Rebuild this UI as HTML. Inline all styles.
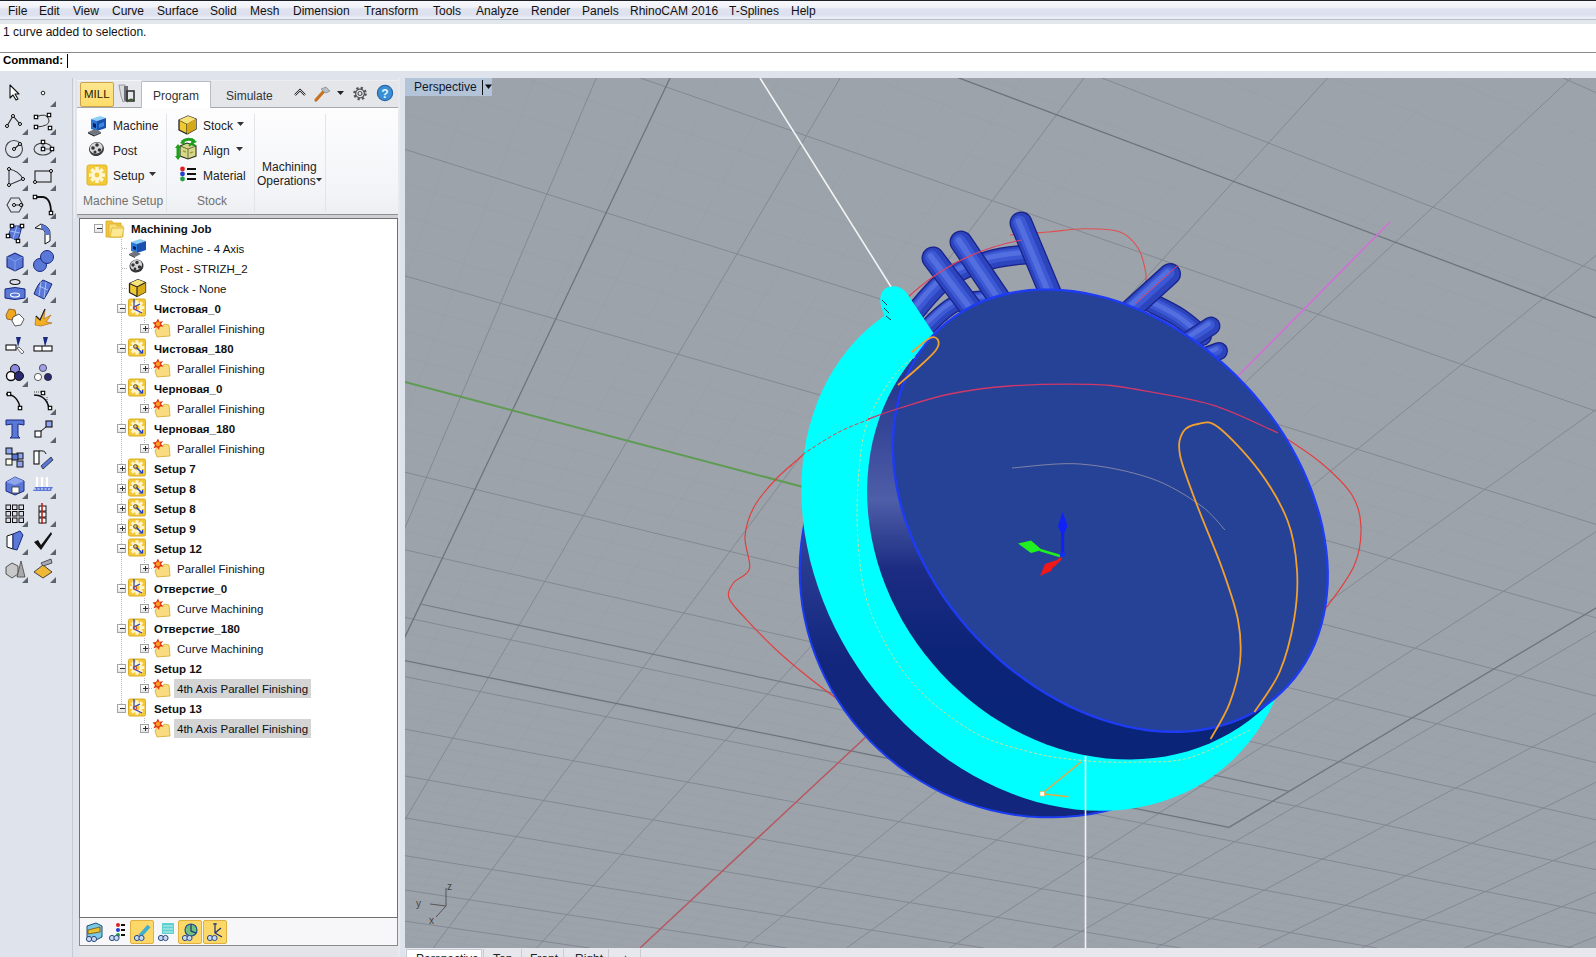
<!DOCTYPE html>
<html><head><meta charset="utf-8">
<style>
*{margin:0;padding:0;box-sizing:border-box}
html,body{width:1596px;height:957px;overflow:hidden;background:#dfe3ec;font-family:"Liberation Sans",sans-serif;font-size:12px;color:#000}
.a{position:absolute;white-space:nowrap}
#topline{left:0;top:0;width:1596px;height:1px;background:#1c2129}
#menu{left:0;top:1px;width:1596px;height:18px;background:linear-gradient(#f6f8fc 0,#f1f3f9 6px,#dfe2ef 8px,#dde0ee 14px,#eceef6 17px)}
#menu span{position:absolute;top:3px;font-size:12px;color:#111}
#ml1{left:0;top:19px;width:1596px;height:1px;background:#b6bec9}
#ml2{left:0;top:20px;width:1596px;height:4px;background:#e2e6ed}
#status{left:0;top:24px;width:1596px;height:28px;background:#fff}
#cmdline{left:0;top:52px;width:1596px;height:1px;background:#8a8a8a}
#cmd{left:0;top:53px;width:1596px;height:18px;background:#fff}
#lefttb{left:0;top:71px;width:73px;height:886px;background:#dfe3ec}
#panel{left:73px;top:71px;width:332px;height:886px;background:#dfe3ec}
#vp{left:405px;top:78px;width:1191px;height:870px;background:#9da3ab;overflow:hidden}
#vptabs{left:405px;top:948px;width:1191px;height:9px;background:#e4e7ed}
.tree{left:79px;top:218px;width:319px;height:700px;background:#fff;border:1px solid #707070}
.row{position:absolute;height:20px;line-height:20px;font-size:11.5px;color:#111}
.b{font-weight:bold}
.bx{width:9px;height:9px;border:1px solid #a4a4a4;background:linear-gradient(#fff,#e4e4e4)}
.trt{font-size:11.5px;color:#111}
.dv{width:1px;background:repeating-linear-gradient(#b8b8b8 0 1px,transparent 1px 2px)}
.dh{height:1px;background:repeating-linear-gradient(90deg,#b8b8b8 0 1px,transparent 1px 2px)}
</style></head><body>
<div class="a" id="topline"></div>
<div class="a" id="menu">
<span style="left:8px">File</span><span style="left:39px">Edit</span><span style="left:73px">View</span><span style="left:112px">Curve</span><span style="left:157px">Surface</span><span style="left:210px">Solid</span><span style="left:250px">Mesh</span><span style="left:293px">Dimension</span><span style="left:364px">Transform</span><span style="left:433px">Tools</span><span style="left:476px">Analyze</span><span style="left:531px">Render</span><span style="left:582px">Panels</span><span style="left:630px">RhinoCAM 2016</span><span style="left:729px">T-Splines</span><span style="left:791px">Help</span>
</div>
<div class="a" id="ml1"></div><div class="a" id="ml2"></div>
<div class="a" id="status"><span class="a" style="left:3px;top:1px;font-size:12px;color:#111">1 curve added to selection.</span></div>
<div class="a" id="cmdline"></div>
<div class="a" id="cmd"><span class="a b" style="left:3px;top:1px;font-size:11.5px;color:#000">Command:</span><div class="a" style="left:67px;top:1px;width:1px;height:14px;background:#000"></div></div>
<div class="a" id="lefttb"></div>
<!--LEFT--><svg class="a" style="left:0;top:0" width="73" height="600" viewBox="0 0 73 600"><g transform="translate(15,93)"><path d="M-5 -8 L-5 5 L-2 2 L1 7 L3 6 L0 1 L4 1 Z" fill="#fff" stroke="#111" stroke-width="1.1" stroke-linejoin="round"/></g><g transform="translate(43,93)"><circle cx="0" cy="0" r="1.8" fill="#fff" stroke="#222" stroke-width="1"/></g><path d="M50 107 L56 107 L56 101 Z" fill="#5c636c"/><g transform="translate(15,121)"><path d="M-8 5 L-2 -5 L5 3" stroke="#222" stroke-width="1.1" fill="none"/><circle cx="-8" cy="5" r="1.5" fill="#fff" stroke="#000" stroke-width="1"/><circle cx="-2" cy="-5" r="1.5" fill="#fff" stroke="#000" stroke-width="1"/><circle cx="5" cy="3" r="1.5" fill="#fff" stroke="#000" stroke-width="1"/></g><path d="M22 135 L28 135 L28 129 Z" fill="#5c636c"/><g transform="translate(43,121)"><path d="M-7 -4 Q4 -9 6 -1 Q7 5 -6 6" stroke="#333" stroke-width="1" fill="none"/><rect x="-8.7" y="-5.7" width="3.4" height="3.4" fill="#fff" stroke="#000" stroke-width="1.1"/><rect x="4.3" y="-7.7" width="3.4" height="3.4" fill="#fff" stroke="#000" stroke-width="1.1"/><rect x="-8.7" y="4.3" width="3.4" height="3.4" fill="#fff" stroke="#000" stroke-width="1.1"/><rect x="5.3" y="5.3" width="3.4" height="3.4" fill="#fff" stroke="#000" stroke-width="1.1"/></g><path d="M50 135 L56 135 L56 129 Z" fill="#5c636c"/><g transform="translate(15,149)"><circle cx="-1" cy="0" r="8.5" fill="none" stroke="#444" stroke-width="1.1"/><path d="M-1 0 L5 -5" stroke="#222" stroke-width="1.2"/><circle cx="-1" cy="0" r="1.5" fill="#fff" stroke="#000" stroke-width="1"/><circle cx="5" cy="-5" r="1.5" fill="#fff" stroke="#000" stroke-width="1"/></g><path d="M22 163 L28 163 L28 157 Z" fill="#5c636c"/><g transform="translate(43,149)"><ellipse cx="0" cy="0" rx="9" ry="6" fill="none" stroke="#444" stroke-width="1.1"/><path d="M0 0 H8 M0 0 V-6" stroke="#222" stroke-width="0.8"/><rect x="-1.7" y="-8.7" width="3.4" height="3.4" fill="#fff" stroke="#000" stroke-width="1.1"/><rect x="-1.7" y="-1.7" width="3.4" height="3.4" fill="#fff" stroke="#000" stroke-width="1.1"/><rect x="7.3" y="-1.7" width="3.4" height="3.4" fill="#fff" stroke="#000" stroke-width="1.1"/></g><path d="M50 163 L56 163 L56 157 Z" fill="#5c636c"/><g transform="translate(15,177)"><path d="M-6 -8 Q4 -6 8 2 L-6 8 Z" stroke="#333" stroke-width="1.1" fill="none"/><circle cx="-6" cy="-8" r="1.5" fill="#fff" stroke="#000" stroke-width="1"/><circle cx="8" cy="2" r="1.5" fill="#fff" stroke="#000" stroke-width="1"/><circle cx="-6" cy="8" r="1.5" fill="#fff" stroke="#000" stroke-width="1"/></g><path d="M22 191 L28 191 L28 185 Z" fill="#5c636c"/><g transform="translate(43,177)"><rect x="-8" y="-6" width="16" height="11" fill="none" stroke="#333" stroke-width="1.2"/><circle cx="8" cy="-6" r="1.5" fill="#fff" stroke="#000" stroke-width="1"/><circle cx="-8" cy="5" r="1.5" fill="#fff" stroke="#000" stroke-width="1"/></g><path d="M50 191 L56 191 L56 185 Z" fill="#5c636c"/><g transform="translate(15,205)"><path d="M-4 -7 L4 -7 L8 0 L4 7 L-4 7 L-8 0 Z" fill="none" stroke="#444" stroke-width="1.1"/><path d="M-1 0 H6" stroke="#222" stroke-width="1"/><circle cx="-1" cy="0" r="1.5" fill="#fff" stroke="#000" stroke-width="1"/><circle cx="6" cy="0" r="1.5" fill="#fff" stroke="#000" stroke-width="1"/></g><path d="M22 219 L28 219 L28 213 Z" fill="#5c636c"/><g transform="translate(43,205)"><path d="M-8 -8 L0 -8 Q8 -7 8 8" stroke="#111" stroke-width="1.8" fill="none"/><rect x="-9.7" y="-9.7" width="3.4" height="3.4" fill="#fff" stroke="#000" stroke-width="1.1"/><rect x="6.3" y="6.3" width="3.4" height="3.4" fill="#fff" stroke="#000" stroke-width="1.1"/></g><path d="M50 219 L56 219 L56 213 Z" fill="#5c636c"/><g transform="translate(15,233)"><path d="M-3 -7 L7 -7 L3 8 L-7 3 Z" fill="#5a78d8" stroke="#1a2a80" stroke-width="1"/><path d="M2 -7 L-2 6 M-5 -2 L5 0" stroke="#b8c8f8" stroke-width="0.8"/><rect x="-4.7" y="-8.7" width="3.4" height="3.4" fill="#fff" stroke="#000" stroke-width="1.1"/><rect x="5.3" y="-8.7" width="3.4" height="3.4" fill="#fff" stroke="#000" stroke-width="1.1"/><rect x="-8.7" y="1.3" width="3.4" height="3.4" fill="#fff" stroke="#000" stroke-width="1.1"/><rect x="1.3" y="6.3" width="3.4" height="3.4" fill="#fff" stroke="#000" stroke-width="1.1"/></g><path d="M22 247 L28 247 L28 241 Z" fill="#5c636c"/><g transform="translate(43,233)"><path d="M-8 -5 L-2 -9 Q8 -6 7 2 L7 8 L2 11 L2 2 Q3 -3 -2 -4 Z" fill="#fff" stroke="#111" stroke-width="1"/><path d="M-2 -9 Q8 -6 7 2 L2 2 Q3 -3 -2 -4Z" fill="#5a78d8"/></g><path d="M50 247 L56 247 L56 241 Z" fill="#5c636c"/><g transform="translate(15,261)"><path d="M-8 -4 L0 -8 L8 -4 L8 6 L0 10 L-8 6 Z" fill="#5a78d8" stroke="#1a2a80" stroke-width="1.1"/><path d="M-8 -4 L0 0 L8 -4 M0 0 V10" stroke="#8ea4ec" stroke-width="0.8" fill="none"/></g><path d="M22 275 L28 275 L28 269 Z" fill="#5c636c"/><g transform="translate(43,261)"><circle cx="-3" cy="4" r="6.5" fill="#5a78d8" stroke="#1a2a80" stroke-width="1"/><circle cx="4" cy="-4" r="6.5" fill="#5a78d8" stroke="#1a2a80" stroke-width="1"/></g><path d="M50 275 L56 275 L56 269 Z" fill="#5c636c"/><g transform="translate(15,289)"><ellipse cx="0" cy="-7" rx="5" ry="2.5" fill="none" stroke="#111" stroke-width="1.1"/><path d="M-10 0 Q0 -3 10 0 L10 9 Q0 12 -10 9 Z" fill="#5a78d8" stroke="#1a2a80" stroke-width="1"/><ellipse cx="0" cy="6" rx="4.5" ry="2" fill="none" stroke="#fff" stroke-width="1.2"/></g><path d="M22 303 L28 303 L28 297 Z" fill="#5c636c"/><g transform="translate(43,289)"><path d="M-9 5 Q-5 -6 0 -9 L9 -5 Q5 4 1 10 Z" fill="#5a78d8" stroke="#1a2a80" stroke-width="1"/><path d="M-4 -3 L5 1 M-2 -7 L-4 7 M3 -7 L1 9" stroke="#c0d0f8" stroke-width="0.8"/></g><path d="M50 303 L56 303 L56 297 Z" fill="#5c636c"/><g transform="translate(15,317)"><path d="M-9 -2 L-6 -8 L0 -7 L1 -2 L-3 3 L-8 2 Z" fill="#f0a820" stroke="#805010" stroke-width="0.8"/><path d="M-2 0 L4 -3 L9 2 L6 8 L0 9 L-3 4Z" fill="#fff" stroke="#333" stroke-width="0.8"/></g><g transform="translate(43,317)"><path d="M-8 8 L-7 -1 L-3 3 L2 -8 L1 2 L8 -2 L3 5 L9 6 L-2 9 Z" fill="#f4b020" stroke="#a06010" stroke-width="0.6"/><path d="M-7 -1 L-3 3 L2 -8" stroke="#222" stroke-width="1.2" fill="none"/></g><g transform="translate(15,345)"><path d="M1 -8 L6 -8 L3 2 Z" fill="#1a2a80"/><rect x="-9" y="0" width="10" height="5" fill="#fff" stroke="#111" stroke-width="1.1"/><path d="M2 3 L7 9 L9 7 L4 2 Z" fill="#fff" stroke="#444" stroke-width="0.8"/></g><g transform="translate(43,345)"><path d="M0 -8 L5 -8 L2 2 Z" fill="#1a2a80"/><rect x="-9" y="1" width="18" height="5" fill="#fff" stroke="#111" stroke-width="1.1"/><path d="M-1 1 V6" stroke="#111"/></g><g transform="translate(15,373)"><circle cx="0" cy="-4" r="4.5" fill="#8a8ae0" stroke="#111" stroke-width="1"/><circle cx="-4" cy="3" r="4.5" fill="#fff" stroke="#111" stroke-width="1.4"/><circle cx="4" cy="3" r="4.5" fill="#2a2a70" stroke="#111" stroke-width="1"/></g><path d="M22 387 L28 387 L28 381 Z" fill="#5c636c"/><g transform="translate(43,373)"><circle cx="0" cy="-5" r="3.6" fill="#a0a0e8" stroke="#334" stroke-width="0.8"/><circle cx="-5" cy="4" r="3.6" fill="#fff" stroke="#333" stroke-width="0.8"/><circle cx="5" cy="4" r="3.6" fill="#2a2a70" stroke="#222" stroke-width="0.8"/></g><g transform="translate(15,401)"><path d="M-9 -7 Q3 -6 5 7" stroke="#111" stroke-width="1.4" fill="none"/><rect x="-7.7" y="-8.7" width="3.4" height="3.4" fill="#fff" stroke="#000" stroke-width="1.1"/><rect x="3.3" y="5.3" width="3.4" height="3.4" fill="#fff" stroke="#000" stroke-width="1.1"/></g><g transform="translate(43,401)"><path d="M-9 -6 Q3 -6 6 7" stroke="#111" stroke-width="1.6" fill="none"/><path d="M-9 -9 L0 -9 M4 -4 V2" stroke="#111" stroke-width="0.8" stroke-dasharray="1 1"/><rect x="-1.7" y="-9.7" width="3.4" height="3.4" fill="#fff" stroke="#000" stroke-width="1.1"/><rect x="5.3" y="5.3" width="3.4" height="3.4" fill="#fff" stroke="#000" stroke-width="1.1"/></g><path d="M50 415 L56 415 L56 409 Z" fill="#5c636c"/><g transform="translate(15,429)"><path d="M-9 -9 L9 -9 L9 -4 L3 -5 L3 7 L5 9 L-5 9 L-3 7 L-3 -5 L-9 -4Z" fill="#5a78d8" stroke="#1a2a80" stroke-width="1"/></g><g transform="translate(43,429)"><rect x="-8" y="2" width="6" height="6" fill="#fff" stroke="#111" stroke-width="1.1"/><rect x="3" y="-8" width="6" height="6" fill="#8ea4ec" stroke="#111" stroke-width="1.1"/><path d="M-2 2 L3 -2" stroke="#111" stroke-width="1"/></g><path d="M50 443 L56 443 L56 437 Z" fill="#5c636c"/><g transform="translate(15,457)"><rect x="-9" y="-9" width="6" height="6" fill="#8ea4ec" stroke="#111"/><rect x="2" y="-4" width="6" height="6" fill="#8ea4ec" stroke="#111"/><rect x="-3" y="-3" width="6" height="6" fill="#5a78d8" stroke="#111"/><rect x="-9" y="2" width="6" height="6" fill="#ffe" stroke="#111"/><rect x="2" y="4" width="6" height="6" fill="#8ea4ec" stroke="#111"/></g><g transform="translate(43,457)"><rect x="-9" y="-6" width="5" height="13" fill="#fff" stroke="#111" stroke-width="1.1"/><path d="M-2 9 L8 0 L10 3 L0 12Z" fill="#5a78d8" stroke="#223" stroke-width="0.8"/><path d="M-4 -6 Q2 -7 3 -3" stroke="#111" fill="none"/></g><g transform="translate(15,485)"><path d="M-9 -3 L0 -8 L9 -4 L9 6 L0 10 L-9 6Z" fill="#5a78d8" stroke="#1a2a80" stroke-width="1"/><path d="M-9 -3 L0 -8 L9 -4 L0 0Z" fill="#8ea4ec"/><rect x="-3" y="2" width="7" height="6" fill="#fff" stroke="#333" stroke-width="0.8"/></g><path d="M22 499 L28 499 L28 493 Z" fill="#5c636c"/><g transform="translate(43,485)"><path d="M-10 6 L8 6 L10 2 L-8 2Z" fill="#5a78d8"/><path d="M-6 -8 V2 M-1 -8 V2 M4 -8 V2" stroke="#fff" stroke-width="2.2"/><path d="M-9 4 H9" stroke="#fff" stroke-dasharray="2 1.5" stroke-width="1"/></g><path d="M50 499 L56 499 L56 493 Z" fill="#5c636c"/><g transform="translate(15,513)"><rect x="-9.0" y="-8.0" width="4.5" height="4.5" fill="#dde" stroke="#111" stroke-width="1"/><rect x="-9.0" y="-1.5" width="4.5" height="4.5" fill="#dde" stroke="#111" stroke-width="1"/><rect x="-9.0" y="5.0" width="4.5" height="4.5" fill="#dde" stroke="#111" stroke-width="1"/><rect x="-2.5" y="-8.0" width="4.5" height="4.5" fill="#dde" stroke="#111" stroke-width="1"/><rect x="-2.5" y="-1.5" width="4.5" height="4.5" fill="#dde" stroke="#111" stroke-width="1"/><rect x="-2.5" y="5.0" width="4.5" height="4.5" fill="#dde" stroke="#111" stroke-width="1"/><rect x="4.0" y="-8.0" width="4.5" height="4.5" fill="#dde" stroke="#111" stroke-width="1"/><rect x="4.0" y="-1.5" width="4.5" height="4.5" fill="#dde" stroke="#111" stroke-width="1"/><rect x="4.0" y="5.0" width="4.5" height="4.5" fill="#dde" stroke="#111" stroke-width="1"/></g><path d="M22 527 L28 527 L28 521 Z" fill="#5c636c"/><g transform="translate(43,513)"><rect x="-4" y="-7" width="7" height="5" fill="#fff" stroke="#111"/><rect x="-4" y="-1" width="7" height="5" fill="#fff" stroke="#111"/><rect x="-4" y="5" width="7" height="5" fill="#fff" stroke="#111"/><path d="M-1 -10 V11" stroke="#c02020" stroke-width="1.6"/></g><path d="M50 527 L56 527 L56 521 Z" fill="#5c636c"/><g transform="translate(15,541)"><path d="M-8 -5 L-2 -7 L-2 8 L-8 6Z" fill="#fff" stroke="#111" stroke-width="1"/><path d="M-2 -7 L5 -10 L8 -6 L2 9 L-2 8Z" fill="#5a78d8" stroke="#1a2a80" stroke-width="1"/></g><path d="M22 555 L28 555 L28 549 Z" fill="#5c636c"/><g transform="translate(43,541)"><path d="M-9 1 L-5 -1 L-2 4 L8 -9 L9 -7 L-2 9 Z" fill="#111"/></g><path d="M50 555 L56 555 L56 549 Z" fill="#5c636c"/><g transform="translate(15,569)"><path d="M-9 -2 L-3 -6 L3 -3 L3 5 L-3 9 L-9 5Z" fill="#c8c8c8" stroke="#333" stroke-width="0.8"/><path d="M2 8 L6 -8 L10 8 Z" fill="#a8a8a8" stroke="#444" stroke-width="0.8"/></g><path d="M22 583 L28 583 L28 577 Z" fill="#5c636c"/><g transform="translate(43,569)"><path d="M-9 3 L0 -4 L9 3 L0 9 Z" fill="#f0b838" stroke="#333" stroke-width="0.9"/><path d="M-2 -6 L8 -10 L9 -6 L0 -3Z" fill="#aab" stroke="#333" stroke-width="0.8"/></g><path d="M50 583 L56 583 L56 577 Z" fill="#5c636c"/></svg><div class="a" style="left:72px;top:78px;width:1px;height:879px;background:#c6cad2"></div><!--/LEFT-->
<div class="a" id="panel"></div>

<!-- PANEL -->
<div class="a" style="left:74px;top:78px;width:1px;height:140px;background:#eef0f4"></div>
<div class="a" style="left:77px;top:80px;width:64px;height:28px;background:#e6e8ee;border-top:1px solid #f4f5f8"></div>
<div class="a" style="left:210px;top:80px;width:190px;height:28px;background:#e4e6ea;border-top:1px solid #eceef2;border-left:1px solid #c9ccd2;border-radius:2px 0 0 0"></div>
<div class="a" style="left:77px;top:107px;width:323px;height:1px;background:#a4a8ae"></div>
<div class="a" style="left:80px;top:82px;width:34px;height:25px;background:linear-gradient(#fde68e,#fddc6a);border:1px solid #caa24a;border-radius:2px"></div>
<span class="a" style="left:84px;top:88px;font-size:11.5px;color:#2a2000">MILL</span>
<svg class="a" style="left:116px;top:82px" width="22" height="24" viewBox="0 0 22 24"><path d="M3 3 L9 3 L10 8 L9 19 L7 20 L5 14 Z" fill="#d8dade" stroke="#9a9ca2" stroke-width="1"/><path d="M8 4 L12 4 L12 18 L10 20 L8 18Z" fill="#6c6e74"/><rect x="11" y="9" width="7" height="10" fill="none" stroke="#333" stroke-width="1.6"/><path d="M11 20 Q14 16 17 18" stroke="#3d5a20" stroke-width="1.5" fill="none"/></svg>
<div class="a" style="left:141px;top:81px;width:70px;height:28px;background:#fff;border:1px solid #b9bcc2;border-bottom:none;border-radius:2px 2px 0 0"></div>
<span class="a" style="left:153px;top:89px;font-size:12px;color:#333">Program</span>
<span class="a" style="left:226px;top:89px;font-size:12px;color:#333">Simulate</span>
<svg class="a" style="left:293px;top:86px" width="14" height="12" viewBox="0 0 14 12"><path d="M2 9 L7 4 L12 9" stroke="#222" stroke-width="2.2" fill="none"/><path d="M2 9 L7 4 L12 9" stroke="#fff" stroke-width="0.8" fill="none"/></svg>
<svg class="a" style="left:313px;top:85px" width="19" height="18" viewBox="0 0 19 18"><path d="M3 15 L11 6" stroke="#c87020" stroke-width="3.2" stroke-linecap="round"/><path d="M8 4 L13 2 L17 6 L13 8 L11 7Z" fill="#b8bcc4" stroke="#8a8e96" stroke-width="0.8"/></svg>
<svg class="a" style="left:336px;top:90px" width="9" height="6" viewBox="0 0 9 6"><path d="M1 1 L8 1 L4.5 5Z" fill="#222"/></svg>
<svg class="a" style="left:351px;top:85px" width="18" height="17" viewBox="0 0 18 17"><g transform="translate(9,8.5)"><circle r="5.6" fill="none" stroke="#555" stroke-width="2.4" stroke-dasharray="2.2 2.2"/><circle r="4.4" fill="none" stroke="#555" stroke-width="1.3"/><circle r="2" fill="none" stroke="#555" stroke-width="1.2"/></g></svg>
<svg class="a" style="left:376px;top:84px" width="18" height="18" viewBox="0 0 18 18"><circle cx="9" cy="9" r="7.6" fill="#3b8fd4" stroke="#2a66a6" stroke-width="1.2"/><text x="9" y="13.5" font-family="Liberation Sans" font-size="12" font-weight="bold" fill="#e8f4ff" text-anchor="middle">?</text></svg>
<!-- ribbon body -->
<div class="a" style="left:77px;top:108px;width:322px;height:107px;background:linear-gradient(#fdfdfe,#f3f4f7 80%,#eceef2)"></div>
<div class="a" style="left:166px;top:114px;width:1px;height:98px;background:#e2e4e8"></div>
<div class="a" style="left:254px;top:114px;width:1px;height:98px;background:#e2e4e8"></div>
<div class="a" style="left:325px;top:114px;width:1px;height:98px;background:#e2e4e8"></div>
<div class="a" style="left:77px;top:214px;width:322px;height:1px;background:#8e9096"></div>
<div class="a" style="left:77px;top:215px;width:322px;height:3px;background:#cfd0d4"></div>
<svg class="a" style="left:87px;top:114px" width="21" height="23" viewBox="0 0 21 23"><path d="M4 5 L13 2 L19 4 L10 7Z" fill="#8cd0f8"/><path d="M4 5 L10 7 L10 17 L4 15Z" fill="#2c78d8"/><path d="M10 7 L19 4 L19 14 L10 17Z" fill="#1a50b0"/><path d="M6 9 L9 10 L9 14 L6 13Z" fill="#0a2050"/><path d="M12 10 L17 8 L17 12 L12 14Z" fill="#3a8ae0"/><path d="M1 18 L8 15 L14 18 L7 21Z" fill="#70747c"/><path d="M1 18 L7 21 L7 22.5 L1 19.5Z" fill="#2a2c30"/><path d="M7 21 L14 18 L14 19.5 L7 22.5Z" fill="#4a4c52"/></svg>
<span class="a" style="left:113px;top:119px;font-size:12px;color:#222">Machine</span>
<svg class="a" style="left:87px;top:140px" width="19" height="18" viewBox="0 0 19 18"><ellipse cx="9.5" cy="9" rx="7.5" ry="7" fill="#3a3a3e" transform="rotate(-20 9.5 9)"/><ellipse cx="9.5" cy="8" rx="6.5" ry="5.5" fill="#d8d8dc" transform="rotate(-20 9.5 9)"/><circle cx="6" cy="8" r="1.8" fill="#333"/><circle cx="10" cy="5" r="1.8" fill="#333"/><circle cx="12.5" cy="10" r="1.8" fill="#333"/><circle cx="8" cy="12" r="1.5" fill="#333"/></svg>
<span class="a" style="left:113px;top:144px;font-size:12px;color:#222">Post</span>
<svg class="a" style="left:86px;top:164px" width="22" height="22" viewBox="0 0 22 22"><rect x="1" y="1" width="20" height="20" rx="2" fill="#f2cb3a" stroke="#e0b420" stroke-width="1"/><g transform="translate(11,11)" fill="#fff6d0"><circle r="5.5"/><rect x="-1.8" y="-8" width="3.6" height="16"/><rect x="-8" y="-1.8" width="16" height="3.6"/><rect x="-1.8" y="-8" width="3.6" height="16" transform="rotate(45)"/><rect x="-8" y="-1.8" width="16" height="3.6" transform="rotate(45)"/><circle r="2.4" fill="#f2cb3a"/></g></svg>
<span class="a" style="left:113px;top:169px;font-size:12px;color:#222">Setup</span>
<svg class="a" style="left:149px;top:172px" width="7" height="5" viewBox="0 0 7 5"><path d="M0 0 L7 0 L3.5 4Z" fill="#333"/></svg>
<svg class="a" style="left:177px;top:114px" width="21" height="22" viewBox="0 0 21 22"><path d="M2 6 L11 2 L19 5 L19 15 L10 20 L2 16Z" fill="#f0c830" stroke="#222" stroke-width="1.3" stroke-linejoin="round"/><path d="M2 6 L10 10 L19 5" fill="none" stroke="#222" stroke-width="1.1"/><path d="M10 10 L10 20" stroke="#222" stroke-width="1.1"/><path d="M2 6 L11 2 L19 5 L10 10Z" fill="#f8e27a"/><path d="M10 10 L19 5 L19 15 L10 20Z" fill="#d4a818"/></svg>
<span class="a" style="left:203px;top:119px;font-size:12px;color:#222">Stock</span>
<svg class="a" style="left:237px;top:122px" width="7" height="5" viewBox="0 0 7 5"><path d="M0 0 L7 0 L3.5 4Z" fill="#333"/></svg>
<svg class="a" style="left:175px;top:137px" width="24" height="24" viewBox="0 0 24 24"><path d="M5 9 L12 6 L21 9 L21 19 L13 22 L5 19Z" fill="#d6d88a" stroke="#303020" stroke-width="1.1"/><path d="M5 9 L13 12 L21 9 M13 12 V22" stroke="#505030" stroke-width="0.8" fill="none"/><path d="M8 14 L11 15 M15 16 L18 15" stroke="#a0a040" stroke-width="1.5"/><path d="M7 5 Q13 0 19 4" stroke="#1ea01e" stroke-width="3" fill="none"/><path d="M17 1 L22 5 L16 7Z" fill="#1ea01e"/><path d="M9 2 L5 6 L10 8Z" fill="#1ea01e"/><path d="M3 10 V20" stroke="#1ea01e" stroke-width="3"/><path d="M0 11 L3 7 L6 11Z M0 19 L3 23 L6 19Z" fill="#1ea01e"/><path d="M14 9 L17 6 L20 9" stroke="#1ea01e" stroke-width="2" fill="none"/></svg>
<span class="a" style="left:203px;top:144px;font-size:12px;color:#222">Align</span>
<svg class="a" style="left:236px;top:147px" width="7" height="5" viewBox="0 0 7 5"><path d="M0 0 L7 0 L3.5 4Z" fill="#333"/></svg>
<svg class="a" style="left:179px;top:166px" width="18" height="16" viewBox="0 0 18 16"><circle cx="3.5" cy="3" r="2.4" fill="#e02020"/><circle cx="3.5" cy="8" r="2.4" fill="#2040d0"/><circle cx="3.5" cy="13" r="2.4" fill="#20a040"/><rect x="8" y="2" width="9" height="2" fill="#111"/><rect x="8" y="7" width="9" height="2" fill="#111"/><rect x="8" y="12" width="9" height="2" fill="#111"/></svg>
<span class="a" style="left:203px;top:169px;font-size:12px;color:#222">Material</span>
<span class="a" style="left:83px;top:194px;font-size:12px;color:#707070">Machine Setup</span>
<span class="a" style="left:197px;top:194px;font-size:12px;color:#707070">Stock</span>
<span class="a" style="left:262px;top:160px;font-size:12px;color:#222">Machining</span>
<span class="a" style="left:257px;top:174px;font-size:12px;color:#222">Operations</span>
<svg class="a" style="left:316px;top:178px" width="6" height="4" viewBox="0 0 6 4"><path d="M0 0 L6 0 L3 3.5Z" fill="#333"/></svg>
<div class="a tree"></div>
<!--TREE--><div class="a dv" style="left:121px;top:239px;height:470px"></div>
<div class="a dh" style="left:122px;top:248px;width:6px"></div>
<div class="a dh" style="left:122px;top:268px;width:6px"></div>
<div class="a dh" style="left:122px;top:288px;width:6px"></div>
<div class="a dv" style="left:144px;top:318px;height:10px"></div>
<div class="a dh" style="left:149px;top:328px;width:3px"></div>
<div class="a dv" style="left:144px;top:358px;height:10px"></div>
<div class="a dh" style="left:149px;top:368px;width:3px"></div>
<div class="a dv" style="left:144px;top:398px;height:10px"></div>
<div class="a dh" style="left:149px;top:408px;width:3px"></div>
<div class="a dv" style="left:144px;top:438px;height:10px"></div>
<div class="a dh" style="left:149px;top:448px;width:3px"></div>
<div class="a dv" style="left:144px;top:558px;height:10px"></div>
<div class="a dh" style="left:149px;top:568px;width:3px"></div>
<div class="a dv" style="left:144px;top:598px;height:10px"></div>
<div class="a dh" style="left:149px;top:608px;width:3px"></div>
<div class="a dv" style="left:144px;top:638px;height:10px"></div>
<div class="a dh" style="left:149px;top:648px;width:3px"></div>
<div class="a dv" style="left:144px;top:678px;height:10px"></div>
<div class="a dh" style="left:149px;top:688px;width:3px"></div>
<div class="a dv" style="left:144px;top:718px;height:10px"></div>
<div class="a dh" style="left:149px;top:728px;width:3px"></div>
<svg class="a" style="left:104px;top:218px" width="21" height="21" viewBox="0 0 21 21"><path d="M2 3 L8 3 L9 5 L17 5 L17 19 L2 19Z" fill="#f0c640" stroke="#d8a820" stroke-width="0.8"/><path d="M5 6 L12 6 L13 8 L19 8 L19 19 L5 19Z" fill="#f8de78" stroke="#dcae30" stroke-width="0.8"/><path d="M8 10 L20 10 L18 19 L6 19Z" fill="#fbe890" stroke="#e0b030" stroke-width="0.8"/></svg>
<div class="a bx" style="left:94px;top:224px"><div class="a" style="left:2px;top:3px;width:5px;height:1px;background:#333"></div></div>
<span class="a trt" style="left:131px;top:223px;font-weight:bold">Machining Job</span>
<svg class="a" style="left:128px;top:238px" width="19" height="20" viewBox="0 0 19 20"><path d="M3 4 L12 1 L18 3 L9 6Z" fill="#8cd0f8"/><path d="M3 4 L9 6 L9 15 L3 13Z" fill="#2c78d8"/><path d="M9 6 L18 3 L18 12 L9 15Z" fill="#1a50b0"/><path d="M5 8 L8 9 L8 12 L5 11Z" fill="#0a2050"/><path d="M1 16 L7 13 L13 16 L7 19Z" fill="#70747c"/><path d="M1 16 L7 19 L7 20 L1 17Z" fill="#2a2c30"/></svg>
<span class="a trt" style="left:160px;top:243px;font-weight:normal">Machine - 4 Axis</span>
<svg class="a" style="left:128px;top:258px" width="17" height="16" viewBox="0 0 17 16"><ellipse cx="8.5" cy="8" rx="7" ry="6.5" fill="#333" transform="rotate(-20 8.5 8)"/><ellipse cx="8.5" cy="7" rx="6" ry="5" fill="#d8d8dc" transform="rotate(-20 8.5 8)"/><circle cx="5" cy="7" r="1.7" fill="#333"/><circle cx="9" cy="4.5" r="1.7" fill="#333"/><circle cx="11.5" cy="9" r="1.7" fill="#333"/><circle cx="7" cy="11" r="1.4" fill="#333"/></svg>
<span class="a trt" style="left:160px;top:263px;font-weight:normal">Post - STRIZH_2</span>
<svg class="a" style="left:128px;top:278px" width="19" height="20" viewBox="0 0 19 20"><path d="M1.5 5.5 L10 1.5 L17.5 4.5 L17.5 14 L9 18.5 L1.5 14.5Z" fill="#f0c830" stroke="#222" stroke-width="1.3" stroke-linejoin="round"/><path d="M1.5 5.5 L10 1.5 L17.5 4.5 L9 9Z" fill="#f8e27a"/><path d="M9 9 L17.5 4.5 L17.5 14 L9 18.5Z" fill="#d8ac18"/><path d="M1.5 5.5 L9 9 L17.5 4.5 M9 9 L9 18.5" fill="none" stroke="#222" stroke-width="1.1"/></svg>
<span class="a trt" style="left:160px;top:283px;font-weight:normal">Stock - None</span>
<svg class="a" style="left:128px;top:298px" width="19" height="19" viewBox="0 0 19 19"><rect x="0.5" y="1" width="17" height="17" rx="1.5" fill="#f2c838" stroke="#dcae20"/><g transform="translate(9,9.5)" fill="#fff4cc"><circle r="5.2"/><rect x="-1.5" y="-7.3" width="3" height="3.2" transform="rotate(0)"/><rect x="-1.5" y="-7.3" width="3" height="3.2" transform="rotate(45)"/><rect x="-1.5" y="-7.3" width="3" height="3.2" transform="rotate(90)"/><rect x="-1.5" y="-7.3" width="3" height="3.2" transform="rotate(135)"/><rect x="-1.5" y="-7.3" width="3" height="3.2" transform="rotate(180)"/><rect x="-1.5" y="-7.3" width="3" height="3.2" transform="rotate(225)"/><rect x="-1.5" y="-7.3" width="3" height="3.2" transform="rotate(270)"/><rect x="-1.5" y="-7.3" width="3" height="3.2" transform="rotate(315)"/><circle r="2.6" fill="#f2cb3a"/></g><path d="M6 1 L6 11 L14 15" stroke="#2040c0" stroke-width="1.2" fill="none"/><path d="M6 9 L12 6" stroke="#2040c0" stroke-width="1.1"/><circle cx="7" cy="10" r="1.8" fill="none" stroke="#c04040" stroke-width="1"/></svg>
<div class="a bx" style="left:117px;top:304px"><div class="a" style="left:2px;top:3px;width:5px;height:1px;background:#333"></div></div>
<span class="a trt" style="left:154px;top:303px;font-weight:bold">Чистовая_0</span>
<svg class="a" style="left:152px;top:318px" width="19" height="20" viewBox="0 0 19 20"><path d="M5 9 L11 8 L12 6 L17 7 L18 18 L5 19 L3 13Z" fill="#f8dc80" stroke="#d8a830" stroke-width="0.8"/><g transform="translate(6,6)"><path d="M0 -5.5 L1.5 -2 L5 -3 L3 0 L5.5 2.5 L1.8 2.5 L1 6 L-1 3 L-4.5 4.5 L-3 1 L-5.5 -1.5 L-2 -2 Z" fill="#e83010"/><circle r="2.2" fill="#f8a020"/></g></svg>
<div class="a bx" style="left:140px;top:324px"><div class="a" style="left:2px;top:3px;width:5px;height:1px;background:#333"></div><div class="a" style="left:4px;top:1px;width:1px;height:5px;background:#333"></div></div>
<span class="a trt" style="left:177px;top:323px;font-weight:normal">Parallel Finishing</span>
<svg class="a" style="left:128px;top:338px" width="19" height="19" viewBox="0 0 19 19"><rect x="0.5" y="1" width="17" height="17" rx="1.5" fill="#f2c838" stroke="#dcae20"/><g transform="translate(9,9.5)" fill="#fff4cc"><circle r="5.2"/><rect x="-1.5" y="-7.3" width="3" height="3.2" transform="rotate(0)"/><rect x="-1.5" y="-7.3" width="3" height="3.2" transform="rotate(45)"/><rect x="-1.5" y="-7.3" width="3" height="3.2" transform="rotate(90)"/><rect x="-1.5" y="-7.3" width="3" height="3.2" transform="rotate(135)"/><rect x="-1.5" y="-7.3" width="3" height="3.2" transform="rotate(180)"/><rect x="-1.5" y="-7.3" width="3" height="3.2" transform="rotate(225)"/><rect x="-1.5" y="-7.3" width="3" height="3.2" transform="rotate(270)"/><rect x="-1.5" y="-7.3" width="3" height="3.2" transform="rotate(315)"/><circle r="2.6" fill="#f2cb3a"/></g><circle cx="7.5" cy="8.5" r="1.8" fill="none" stroke="#605020" stroke-width="1.1"/><path d="M8.5 9.5 L14 15" stroke="#2040c0" stroke-width="1.5"/><path d="M11.5 15 L14.5 15 L14.5 12" stroke="#2040c0" stroke-width="1.2" fill="none"/></svg>
<div class="a bx" style="left:117px;top:344px"><div class="a" style="left:2px;top:3px;width:5px;height:1px;background:#333"></div></div>
<span class="a trt" style="left:154px;top:343px;font-weight:bold">Чистовая_180</span>
<svg class="a" style="left:152px;top:358px" width="19" height="20" viewBox="0 0 19 20"><path d="M5 9 L11 8 L12 6 L17 7 L18 18 L5 19 L3 13Z" fill="#f8dc80" stroke="#d8a830" stroke-width="0.8"/><g transform="translate(6,6)"><path d="M0 -5.5 L1.5 -2 L5 -3 L3 0 L5.5 2.5 L1.8 2.5 L1 6 L-1 3 L-4.5 4.5 L-3 1 L-5.5 -1.5 L-2 -2 Z" fill="#e83010"/><circle r="2.2" fill="#f8a020"/></g></svg>
<div class="a bx" style="left:140px;top:364px"><div class="a" style="left:2px;top:3px;width:5px;height:1px;background:#333"></div><div class="a" style="left:4px;top:1px;width:1px;height:5px;background:#333"></div></div>
<span class="a trt" style="left:177px;top:363px;font-weight:normal">Parallel Finishing</span>
<svg class="a" style="left:128px;top:378px" width="19" height="19" viewBox="0 0 19 19"><rect x="0.5" y="1" width="17" height="17" rx="1.5" fill="#f2c838" stroke="#dcae20"/><g transform="translate(9,9.5)" fill="#fff4cc"><circle r="5.2"/><rect x="-1.5" y="-7.3" width="3" height="3.2" transform="rotate(0)"/><rect x="-1.5" y="-7.3" width="3" height="3.2" transform="rotate(45)"/><rect x="-1.5" y="-7.3" width="3" height="3.2" transform="rotate(90)"/><rect x="-1.5" y="-7.3" width="3" height="3.2" transform="rotate(135)"/><rect x="-1.5" y="-7.3" width="3" height="3.2" transform="rotate(180)"/><rect x="-1.5" y="-7.3" width="3" height="3.2" transform="rotate(225)"/><rect x="-1.5" y="-7.3" width="3" height="3.2" transform="rotate(270)"/><rect x="-1.5" y="-7.3" width="3" height="3.2" transform="rotate(315)"/><circle r="2.6" fill="#f2cb3a"/></g><circle cx="7.5" cy="8.5" r="1.8" fill="none" stroke="#605020" stroke-width="1.1"/><path d="M8.5 9.5 L14 15" stroke="#2040c0" stroke-width="1.5"/><path d="M11.5 15 L14.5 15 L14.5 12" stroke="#2040c0" stroke-width="1.2" fill="none"/></svg>
<div class="a bx" style="left:117px;top:384px"><div class="a" style="left:2px;top:3px;width:5px;height:1px;background:#333"></div></div>
<span class="a trt" style="left:154px;top:383px;font-weight:bold">Черновая_0</span>
<svg class="a" style="left:152px;top:398px" width="19" height="20" viewBox="0 0 19 20"><path d="M5 9 L11 8 L12 6 L17 7 L18 18 L5 19 L3 13Z" fill="#f8dc80" stroke="#d8a830" stroke-width="0.8"/><g transform="translate(6,6)"><path d="M0 -5.5 L1.5 -2 L5 -3 L3 0 L5.5 2.5 L1.8 2.5 L1 6 L-1 3 L-4.5 4.5 L-3 1 L-5.5 -1.5 L-2 -2 Z" fill="#e83010"/><circle r="2.2" fill="#f8a020"/></g></svg>
<div class="a bx" style="left:140px;top:404px"><div class="a" style="left:2px;top:3px;width:5px;height:1px;background:#333"></div><div class="a" style="left:4px;top:1px;width:1px;height:5px;background:#333"></div></div>
<span class="a trt" style="left:177px;top:403px;font-weight:normal">Parallel Finishing</span>
<svg class="a" style="left:128px;top:418px" width="19" height="19" viewBox="0 0 19 19"><rect x="0.5" y="1" width="17" height="17" rx="1.5" fill="#f2c838" stroke="#dcae20"/><g transform="translate(9,9.5)" fill="#fff4cc"><circle r="5.2"/><rect x="-1.5" y="-7.3" width="3" height="3.2" transform="rotate(0)"/><rect x="-1.5" y="-7.3" width="3" height="3.2" transform="rotate(45)"/><rect x="-1.5" y="-7.3" width="3" height="3.2" transform="rotate(90)"/><rect x="-1.5" y="-7.3" width="3" height="3.2" transform="rotate(135)"/><rect x="-1.5" y="-7.3" width="3" height="3.2" transform="rotate(180)"/><rect x="-1.5" y="-7.3" width="3" height="3.2" transform="rotate(225)"/><rect x="-1.5" y="-7.3" width="3" height="3.2" transform="rotate(270)"/><rect x="-1.5" y="-7.3" width="3" height="3.2" transform="rotate(315)"/><circle r="2.6" fill="#f2cb3a"/></g><circle cx="7.5" cy="8.5" r="1.8" fill="none" stroke="#605020" stroke-width="1.1"/><path d="M8.5 9.5 L14 15" stroke="#2040c0" stroke-width="1.5"/><path d="M11.5 15 L14.5 15 L14.5 12" stroke="#2040c0" stroke-width="1.2" fill="none"/></svg>
<div class="a bx" style="left:117px;top:424px"><div class="a" style="left:2px;top:3px;width:5px;height:1px;background:#333"></div></div>
<span class="a trt" style="left:154px;top:423px;font-weight:bold">Черновая_180</span>
<svg class="a" style="left:152px;top:438px" width="19" height="20" viewBox="0 0 19 20"><path d="M5 9 L11 8 L12 6 L17 7 L18 18 L5 19 L3 13Z" fill="#f8dc80" stroke="#d8a830" stroke-width="0.8"/><g transform="translate(6,6)"><path d="M0 -5.5 L1.5 -2 L5 -3 L3 0 L5.5 2.5 L1.8 2.5 L1 6 L-1 3 L-4.5 4.5 L-3 1 L-5.5 -1.5 L-2 -2 Z" fill="#e83010"/><circle r="2.2" fill="#f8a020"/></g></svg>
<div class="a bx" style="left:140px;top:444px"><div class="a" style="left:2px;top:3px;width:5px;height:1px;background:#333"></div><div class="a" style="left:4px;top:1px;width:1px;height:5px;background:#333"></div></div>
<span class="a trt" style="left:177px;top:443px;font-weight:normal">Parallel Finishing</span>
<svg class="a" style="left:128px;top:458px" width="19" height="19" viewBox="0 0 19 19"><rect x="0.5" y="1" width="17" height="17" rx="1.5" fill="#f2c838" stroke="#dcae20"/><g transform="translate(9,9.5)" fill="#fff4cc"><circle r="5.2"/><rect x="-1.5" y="-7.3" width="3" height="3.2" transform="rotate(0)"/><rect x="-1.5" y="-7.3" width="3" height="3.2" transform="rotate(45)"/><rect x="-1.5" y="-7.3" width="3" height="3.2" transform="rotate(90)"/><rect x="-1.5" y="-7.3" width="3" height="3.2" transform="rotate(135)"/><rect x="-1.5" y="-7.3" width="3" height="3.2" transform="rotate(180)"/><rect x="-1.5" y="-7.3" width="3" height="3.2" transform="rotate(225)"/><rect x="-1.5" y="-7.3" width="3" height="3.2" transform="rotate(270)"/><rect x="-1.5" y="-7.3" width="3" height="3.2" transform="rotate(315)"/><circle r="2.6" fill="#f2cb3a"/></g><circle cx="7.5" cy="8.5" r="1.8" fill="none" stroke="#605020" stroke-width="1.1"/><path d="M8.5 9.5 L14 15" stroke="#2040c0" stroke-width="1.5"/><path d="M11.5 15 L14.5 15 L14.5 12" stroke="#2040c0" stroke-width="1.2" fill="none"/></svg>
<div class="a bx" style="left:117px;top:464px"><div class="a" style="left:2px;top:3px;width:5px;height:1px;background:#333"></div><div class="a" style="left:4px;top:1px;width:1px;height:5px;background:#333"></div></div>
<span class="a trt" style="left:154px;top:463px;font-weight:bold">Setup 7</span>
<svg class="a" style="left:128px;top:478px" width="19" height="19" viewBox="0 0 19 19"><rect x="0.5" y="1" width="17" height="17" rx="1.5" fill="#f2c838" stroke="#dcae20"/><g transform="translate(9,9.5)" fill="#fff4cc"><circle r="5.2"/><rect x="-1.5" y="-7.3" width="3" height="3.2" transform="rotate(0)"/><rect x="-1.5" y="-7.3" width="3" height="3.2" transform="rotate(45)"/><rect x="-1.5" y="-7.3" width="3" height="3.2" transform="rotate(90)"/><rect x="-1.5" y="-7.3" width="3" height="3.2" transform="rotate(135)"/><rect x="-1.5" y="-7.3" width="3" height="3.2" transform="rotate(180)"/><rect x="-1.5" y="-7.3" width="3" height="3.2" transform="rotate(225)"/><rect x="-1.5" y="-7.3" width="3" height="3.2" transform="rotate(270)"/><rect x="-1.5" y="-7.3" width="3" height="3.2" transform="rotate(315)"/><circle r="2.6" fill="#f2cb3a"/></g><circle cx="7.5" cy="8.5" r="1.8" fill="none" stroke="#605020" stroke-width="1.1"/><path d="M8.5 9.5 L14 15" stroke="#2040c0" stroke-width="1.5"/><path d="M11.5 15 L14.5 15 L14.5 12" stroke="#2040c0" stroke-width="1.2" fill="none"/></svg>
<div class="a bx" style="left:117px;top:484px"><div class="a" style="left:2px;top:3px;width:5px;height:1px;background:#333"></div><div class="a" style="left:4px;top:1px;width:1px;height:5px;background:#333"></div></div>
<span class="a trt" style="left:154px;top:483px;font-weight:bold">Setup 8</span>
<svg class="a" style="left:128px;top:498px" width="19" height="19" viewBox="0 0 19 19"><rect x="0.5" y="1" width="17" height="17" rx="1.5" fill="#f2c838" stroke="#dcae20"/><g transform="translate(9,9.5)" fill="#fff4cc"><circle r="5.2"/><rect x="-1.5" y="-7.3" width="3" height="3.2" transform="rotate(0)"/><rect x="-1.5" y="-7.3" width="3" height="3.2" transform="rotate(45)"/><rect x="-1.5" y="-7.3" width="3" height="3.2" transform="rotate(90)"/><rect x="-1.5" y="-7.3" width="3" height="3.2" transform="rotate(135)"/><rect x="-1.5" y="-7.3" width="3" height="3.2" transform="rotate(180)"/><rect x="-1.5" y="-7.3" width="3" height="3.2" transform="rotate(225)"/><rect x="-1.5" y="-7.3" width="3" height="3.2" transform="rotate(270)"/><rect x="-1.5" y="-7.3" width="3" height="3.2" transform="rotate(315)"/><circle r="2.6" fill="#f2cb3a"/></g><circle cx="7.5" cy="8.5" r="1.8" fill="none" stroke="#605020" stroke-width="1.1"/><path d="M8.5 9.5 L14 15" stroke="#2040c0" stroke-width="1.5"/><path d="M11.5 15 L14.5 15 L14.5 12" stroke="#2040c0" stroke-width="1.2" fill="none"/></svg>
<div class="a bx" style="left:117px;top:504px"><div class="a" style="left:2px;top:3px;width:5px;height:1px;background:#333"></div><div class="a" style="left:4px;top:1px;width:1px;height:5px;background:#333"></div></div>
<span class="a trt" style="left:154px;top:503px;font-weight:bold">Setup 8</span>
<svg class="a" style="left:128px;top:518px" width="19" height="19" viewBox="0 0 19 19"><rect x="0.5" y="1" width="17" height="17" rx="1.5" fill="#f2c838" stroke="#dcae20"/><g transform="translate(9,9.5)" fill="#fff4cc"><circle r="5.2"/><rect x="-1.5" y="-7.3" width="3" height="3.2" transform="rotate(0)"/><rect x="-1.5" y="-7.3" width="3" height="3.2" transform="rotate(45)"/><rect x="-1.5" y="-7.3" width="3" height="3.2" transform="rotate(90)"/><rect x="-1.5" y="-7.3" width="3" height="3.2" transform="rotate(135)"/><rect x="-1.5" y="-7.3" width="3" height="3.2" transform="rotate(180)"/><rect x="-1.5" y="-7.3" width="3" height="3.2" transform="rotate(225)"/><rect x="-1.5" y="-7.3" width="3" height="3.2" transform="rotate(270)"/><rect x="-1.5" y="-7.3" width="3" height="3.2" transform="rotate(315)"/><circle r="2.6" fill="#f2cb3a"/></g><circle cx="7.5" cy="8.5" r="1.8" fill="none" stroke="#605020" stroke-width="1.1"/><path d="M8.5 9.5 L14 15" stroke="#2040c0" stroke-width="1.5"/><path d="M11.5 15 L14.5 15 L14.5 12" stroke="#2040c0" stroke-width="1.2" fill="none"/></svg>
<div class="a bx" style="left:117px;top:524px"><div class="a" style="left:2px;top:3px;width:5px;height:1px;background:#333"></div><div class="a" style="left:4px;top:1px;width:1px;height:5px;background:#333"></div></div>
<span class="a trt" style="left:154px;top:523px;font-weight:bold">Setup 9</span>
<svg class="a" style="left:128px;top:538px" width="19" height="19" viewBox="0 0 19 19"><rect x="0.5" y="1" width="17" height="17" rx="1.5" fill="#f2c838" stroke="#dcae20"/><g transform="translate(9,9.5)" fill="#fff4cc"><circle r="5.2"/><rect x="-1.5" y="-7.3" width="3" height="3.2" transform="rotate(0)"/><rect x="-1.5" y="-7.3" width="3" height="3.2" transform="rotate(45)"/><rect x="-1.5" y="-7.3" width="3" height="3.2" transform="rotate(90)"/><rect x="-1.5" y="-7.3" width="3" height="3.2" transform="rotate(135)"/><rect x="-1.5" y="-7.3" width="3" height="3.2" transform="rotate(180)"/><rect x="-1.5" y="-7.3" width="3" height="3.2" transform="rotate(225)"/><rect x="-1.5" y="-7.3" width="3" height="3.2" transform="rotate(270)"/><rect x="-1.5" y="-7.3" width="3" height="3.2" transform="rotate(315)"/><circle r="2.6" fill="#f2cb3a"/></g><circle cx="7.5" cy="8.5" r="1.8" fill="none" stroke="#605020" stroke-width="1.1"/><path d="M8.5 9.5 L14 15" stroke="#2040c0" stroke-width="1.5"/><path d="M11.5 15 L14.5 15 L14.5 12" stroke="#2040c0" stroke-width="1.2" fill="none"/></svg>
<div class="a bx" style="left:117px;top:544px"><div class="a" style="left:2px;top:3px;width:5px;height:1px;background:#333"></div></div>
<span class="a trt" style="left:154px;top:543px;font-weight:bold">Setup 12</span>
<svg class="a" style="left:152px;top:558px" width="19" height="20" viewBox="0 0 19 20"><path d="M5 9 L11 8 L12 6 L17 7 L18 18 L5 19 L3 13Z" fill="#f8dc80" stroke="#d8a830" stroke-width="0.8"/><g transform="translate(6,6)"><path d="M0 -5.5 L1.5 -2 L5 -3 L3 0 L5.5 2.5 L1.8 2.5 L1 6 L-1 3 L-4.5 4.5 L-3 1 L-5.5 -1.5 L-2 -2 Z" fill="#e83010"/><circle r="2.2" fill="#f8a020"/></g></svg>
<div class="a bx" style="left:140px;top:564px"><div class="a" style="left:2px;top:3px;width:5px;height:1px;background:#333"></div><div class="a" style="left:4px;top:1px;width:1px;height:5px;background:#333"></div></div>
<span class="a trt" style="left:177px;top:563px;font-weight:normal">Parallel Finishing</span>
<svg class="a" style="left:128px;top:578px" width="19" height="19" viewBox="0 0 19 19"><rect x="0.5" y="1" width="17" height="17" rx="1.5" fill="#f2c838" stroke="#dcae20"/><g transform="translate(9,9.5)" fill="#fff4cc"><circle r="5.2"/><rect x="-1.5" y="-7.3" width="3" height="3.2" transform="rotate(0)"/><rect x="-1.5" y="-7.3" width="3" height="3.2" transform="rotate(45)"/><rect x="-1.5" y="-7.3" width="3" height="3.2" transform="rotate(90)"/><rect x="-1.5" y="-7.3" width="3" height="3.2" transform="rotate(135)"/><rect x="-1.5" y="-7.3" width="3" height="3.2" transform="rotate(180)"/><rect x="-1.5" y="-7.3" width="3" height="3.2" transform="rotate(225)"/><rect x="-1.5" y="-7.3" width="3" height="3.2" transform="rotate(270)"/><rect x="-1.5" y="-7.3" width="3" height="3.2" transform="rotate(315)"/><circle r="2.6" fill="#f2cb3a"/></g><path d="M6 1 L6 11 L14 15" stroke="#2040c0" stroke-width="1.2" fill="none"/><path d="M6 9 L12 6" stroke="#2040c0" stroke-width="1.1"/><circle cx="7" cy="10" r="1.8" fill="none" stroke="#c04040" stroke-width="1"/></svg>
<div class="a bx" style="left:117px;top:584px"><div class="a" style="left:2px;top:3px;width:5px;height:1px;background:#333"></div></div>
<span class="a trt" style="left:154px;top:583px;font-weight:bold">Отверстие_0</span>
<svg class="a" style="left:152px;top:598px" width="19" height="20" viewBox="0 0 19 20"><path d="M5 9 L11 8 L12 6 L17 7 L18 18 L5 19 L3 13Z" fill="#f8dc80" stroke="#d8a830" stroke-width="0.8"/><g transform="translate(6,6)"><path d="M0 -5.5 L1.5 -2 L5 -3 L3 0 L5.5 2.5 L1.8 2.5 L1 6 L-1 3 L-4.5 4.5 L-3 1 L-5.5 -1.5 L-2 -2 Z" fill="#e83010"/><circle r="2.2" fill="#f8a020"/></g></svg>
<div class="a bx" style="left:140px;top:604px"><div class="a" style="left:2px;top:3px;width:5px;height:1px;background:#333"></div><div class="a" style="left:4px;top:1px;width:1px;height:5px;background:#333"></div></div>
<span class="a trt" style="left:177px;top:603px;font-weight:normal">Curve Machining</span>
<svg class="a" style="left:128px;top:618px" width="19" height="19" viewBox="0 0 19 19"><rect x="0.5" y="1" width="17" height="17" rx="1.5" fill="#f2c838" stroke="#dcae20"/><g transform="translate(9,9.5)" fill="#fff4cc"><circle r="5.2"/><rect x="-1.5" y="-7.3" width="3" height="3.2" transform="rotate(0)"/><rect x="-1.5" y="-7.3" width="3" height="3.2" transform="rotate(45)"/><rect x="-1.5" y="-7.3" width="3" height="3.2" transform="rotate(90)"/><rect x="-1.5" y="-7.3" width="3" height="3.2" transform="rotate(135)"/><rect x="-1.5" y="-7.3" width="3" height="3.2" transform="rotate(180)"/><rect x="-1.5" y="-7.3" width="3" height="3.2" transform="rotate(225)"/><rect x="-1.5" y="-7.3" width="3" height="3.2" transform="rotate(270)"/><rect x="-1.5" y="-7.3" width="3" height="3.2" transform="rotate(315)"/><circle r="2.6" fill="#f2cb3a"/></g><path d="M6 1 L6 11 L14 15" stroke="#2040c0" stroke-width="1.2" fill="none"/><path d="M6 9 L12 6" stroke="#2040c0" stroke-width="1.1"/><circle cx="7" cy="10" r="1.8" fill="none" stroke="#c04040" stroke-width="1"/></svg>
<div class="a bx" style="left:117px;top:624px"><div class="a" style="left:2px;top:3px;width:5px;height:1px;background:#333"></div></div>
<span class="a trt" style="left:154px;top:623px;font-weight:bold">Отверстие_180</span>
<svg class="a" style="left:152px;top:638px" width="19" height="20" viewBox="0 0 19 20"><path d="M5 9 L11 8 L12 6 L17 7 L18 18 L5 19 L3 13Z" fill="#f8dc80" stroke="#d8a830" stroke-width="0.8"/><g transform="translate(6,6)"><path d="M0 -5.5 L1.5 -2 L5 -3 L3 0 L5.5 2.5 L1.8 2.5 L1 6 L-1 3 L-4.5 4.5 L-3 1 L-5.5 -1.5 L-2 -2 Z" fill="#e83010"/><circle r="2.2" fill="#f8a020"/></g></svg>
<div class="a bx" style="left:140px;top:644px"><div class="a" style="left:2px;top:3px;width:5px;height:1px;background:#333"></div><div class="a" style="left:4px;top:1px;width:1px;height:5px;background:#333"></div></div>
<span class="a trt" style="left:177px;top:643px;font-weight:normal">Curve Machining</span>
<svg class="a" style="left:128px;top:658px" width="19" height="19" viewBox="0 0 19 19"><rect x="0.5" y="1" width="17" height="17" rx="1.5" fill="#f2c838" stroke="#dcae20"/><g transform="translate(9,9.5)" fill="#fff4cc"><circle r="5.2"/><rect x="-1.5" y="-7.3" width="3" height="3.2" transform="rotate(0)"/><rect x="-1.5" y="-7.3" width="3" height="3.2" transform="rotate(45)"/><rect x="-1.5" y="-7.3" width="3" height="3.2" transform="rotate(90)"/><rect x="-1.5" y="-7.3" width="3" height="3.2" transform="rotate(135)"/><rect x="-1.5" y="-7.3" width="3" height="3.2" transform="rotate(180)"/><rect x="-1.5" y="-7.3" width="3" height="3.2" transform="rotate(225)"/><rect x="-1.5" y="-7.3" width="3" height="3.2" transform="rotate(270)"/><rect x="-1.5" y="-7.3" width="3" height="3.2" transform="rotate(315)"/><circle r="2.6" fill="#f2cb3a"/></g><path d="M6 1 L6 11 L14 15" stroke="#2040c0" stroke-width="1.2" fill="none"/><path d="M6 9 L12 6" stroke="#2040c0" stroke-width="1.1"/><circle cx="7" cy="10" r="1.8" fill="none" stroke="#c04040" stroke-width="1"/></svg>
<div class="a bx" style="left:117px;top:664px"><div class="a" style="left:2px;top:3px;width:5px;height:1px;background:#333"></div></div>
<span class="a trt" style="left:154px;top:663px;font-weight:bold">Setup 12</span>
<svg class="a" style="left:152px;top:678px" width="19" height="20" viewBox="0 0 19 20"><path d="M5 9 L11 8 L12 6 L17 7 L18 18 L5 19 L3 13Z" fill="#f8dc80" stroke="#d8a830" stroke-width="0.8"/><g transform="translate(6,6)"><path d="M0 -5.5 L1.5 -2 L5 -3 L3 0 L5.5 2.5 L1.8 2.5 L1 6 L-1 3 L-4.5 4.5 L-3 1 L-5.5 -1.5 L-2 -2 Z" fill="#e83010"/><circle r="2.2" fill="#f8a020"/></g></svg>
<div class="a bx" style="left:140px;top:684px"><div class="a" style="left:2px;top:3px;width:5px;height:1px;background:#333"></div><div class="a" style="left:4px;top:1px;width:1px;height:5px;background:#333"></div></div>
<div class="a" style="left:174px;top:679px;width:137px;height:19px;background:#d4d4d4"></div>
<span class="a trt" style="left:177px;top:683px;font-weight:normal">4th Axis Parallel Finishing</span>
<svg class="a" style="left:128px;top:698px" width="19" height="19" viewBox="0 0 19 19"><rect x="0.5" y="1" width="17" height="17" rx="1.5" fill="#f2c838" stroke="#dcae20"/><g transform="translate(9,9.5)" fill="#fff4cc"><circle r="5.2"/><rect x="-1.5" y="-7.3" width="3" height="3.2" transform="rotate(0)"/><rect x="-1.5" y="-7.3" width="3" height="3.2" transform="rotate(45)"/><rect x="-1.5" y="-7.3" width="3" height="3.2" transform="rotate(90)"/><rect x="-1.5" y="-7.3" width="3" height="3.2" transform="rotate(135)"/><rect x="-1.5" y="-7.3" width="3" height="3.2" transform="rotate(180)"/><rect x="-1.5" y="-7.3" width="3" height="3.2" transform="rotate(225)"/><rect x="-1.5" y="-7.3" width="3" height="3.2" transform="rotate(270)"/><rect x="-1.5" y="-7.3" width="3" height="3.2" transform="rotate(315)"/><circle r="2.6" fill="#f2cb3a"/></g><path d="M6 1 L6 11 L14 15" stroke="#2040c0" stroke-width="1.2" fill="none"/><path d="M6 9 L12 6" stroke="#2040c0" stroke-width="1.1"/><circle cx="7" cy="10" r="1.8" fill="none" stroke="#c04040" stroke-width="1"/></svg>
<div class="a bx" style="left:117px;top:704px"><div class="a" style="left:2px;top:3px;width:5px;height:1px;background:#333"></div></div>
<span class="a trt" style="left:154px;top:703px;font-weight:bold">Setup 13</span>
<svg class="a" style="left:152px;top:718px" width="19" height="20" viewBox="0 0 19 20"><path d="M5 9 L11 8 L12 6 L17 7 L18 18 L5 19 L3 13Z" fill="#f8dc80" stroke="#d8a830" stroke-width="0.8"/><g transform="translate(6,6)"><path d="M0 -5.5 L1.5 -2 L5 -3 L3 0 L5.5 2.5 L1.8 2.5 L1 6 L-1 3 L-4.5 4.5 L-3 1 L-5.5 -1.5 L-2 -2 Z" fill="#e83010"/><circle r="2.2" fill="#f8a020"/></g></svg>
<div class="a bx" style="left:140px;top:724px"><div class="a" style="left:2px;top:3px;width:5px;height:1px;background:#333"></div><div class="a" style="left:4px;top:1px;width:1px;height:5px;background:#333"></div></div>
<div class="a" style="left:174px;top:719px;width:137px;height:19px;background:#d4d4d4"></div>
<span class="a trt" style="left:177px;top:723px;font-weight:normal">4th Axis Parallel Finishing</span><!--/TREE-->

<!-- bottom toolbar -->
<div class="a" style="left:79px;top:918px;width:319px;height:28px;background:#f7f7f9;border-left:1px solid #8a8a8a;border-right:1px solid #8a8a8a;border-bottom:1px solid #8a8a8a"></div>
<div class="a" style="left:79px;top:946px;width:319px;height:11px;background:#e3e5ea"></div>
<svg class="a" style="left:84px;top:921px" width="20" height="22" viewBox="0 0 20 22"><path d="M3 5 L12 2 L18 5 L18 16 L10 20 L3 16Z" fill="#7ac8e8" stroke="#205070" stroke-width="1"/><path d="M4 9 L16 6 L16 11 L4 13Z" fill="#e8c030" stroke="#705010" stroke-width="0.8"/><circle cx="5" cy="18" r="2.6" fill="#c8d8f0" stroke="#2a4a80" stroke-width="1"/><circle cx="10" cy="18" r="2.6" fill="#c8d8f0" stroke="#2a4a80" stroke-width="1"/></svg>
<svg class="a" style="left:108px;top:921px" width="20" height="22" viewBox="0 0 20 22"><circle cx="10" cy="4" r="2" fill="#e02020"/><circle cx="10" cy="9" r="2" fill="#2040d0"/><circle cx="10" cy="14" r="2" fill="#20a040"/><rect x="13" y="3" width="4" height="2" fill="#111"/><rect x="13" y="8" width="4" height="2" fill="#111"/><rect x="13" y="13" width="4" height="2" fill="#111"/><circle cx="4" cy="17" r="2.6" fill="#c8d8f0" stroke="#2a4a80" stroke-width="1"/><circle cx="8.5" cy="17" r="2.6" fill="#c8d8f0" stroke="#2a4a80" stroke-width="1"/></svg>
<div class="a" style="left:130px;top:920px;width:24px;height:24px;background:#fcd868;border:1px solid #e0b040;border-radius:2px"></div>
<svg class="a" style="left:132px;top:921px" width="20" height="22" viewBox="0 0 20 22"><path d="M8 15 L17 5" stroke="#40b0d0" stroke-width="4"/><circle cx="5" cy="17" r="2.6" fill="#c8d8f0" stroke="#2a4a80" stroke-width="1"/><circle cx="9.5" cy="17" r="2.6" fill="#c8d8f0" stroke="#2a4a80" stroke-width="1"/></svg>
<svg class="a" style="left:156px;top:921px" width="20" height="22" viewBox="0 0 20 22"><rect x="6" y="2" width="12" height="11" fill="#60d0d0"/><path d="M7 5 H17 M7 8 H17 M7 11 H17" stroke="#c0f0f0" stroke-width="1"/><circle cx="5" cy="17" r="2.6" fill="#c8d8f0" stroke="#2a4a80" stroke-width="1"/><circle cx="9.5" cy="17" r="2.6" fill="#c8d8f0" stroke="#2a4a80" stroke-width="1"/></svg>
<div class="a" style="left:178px;top:920px;width:24px;height:24px;background:#fcd868;border:1px solid #e0b040;border-radius:2px"></div>
<svg class="a" style="left:180px;top:921px" width="20" height="22" viewBox="0 0 20 22"><circle cx="11" cy="9" r="6" fill="#70c080" stroke="#205090" stroke-width="1.2"/><path d="M11 3 L11 10 L16 12" stroke="#203070" stroke-width="1.2" fill="none"/><circle cx="5" cy="17" r="2.6" fill="#c8d8f0" stroke="#2a4a80" stroke-width="1"/><circle cx="9.5" cy="17" r="2.6" fill="#c8d8f0" stroke="#2a4a80" stroke-width="1"/></svg>
<div class="a" style="left:203px;top:920px;width:24px;height:24px;background:#fcd868;border:1px solid #e0b040;border-radius:2px"></div>
<svg class="a" style="left:205px;top:921px" width="20" height="22" viewBox="0 0 20 22"><path d="M10 2 L10 12 L17 16 M10 12 L16 7 M8 3 H12" stroke="#203070" stroke-width="1.2" fill="none"/><circle cx="5" cy="17" r="2.6" fill="#c8d8f0" stroke="#2a4a80" stroke-width="1"/><circle cx="9.5" cy="17" r="2.6" fill="#c8d8f0" stroke="#2a4a80" stroke-width="1"/></svg>
<div class="a" style="left:398px;top:78px;width:2px;height:879px;background:#e8e9ee"></div>
<!--VP--><svg class="a" style="left:405px;top:78px" width="1191" height="870" viewBox="405 78 1191 870"><defs>
<linearGradient id="cyl" gradientUnits="userSpaceOnUse" x1="0" y1="380" x2="0" y2="700">
<stop offset="0" stop-color="#26368c"/><stop offset="0.375" stop-color="#4e5ea8"/><stop offset="0.59" stop-color="#1c2c82"/><stop offset="0.85" stop-color="#0c2478"/><stop offset="1" stop-color="#0a2478"/></linearGradient>
<linearGradient id="nav" gradientUnits="userSpaceOnUse" x1="0" y1="520" x2="0" y2="660">
<stop offset="0" stop-color="#34449a"/><stop offset="1" stop-color="#12267e"/></linearGradient>
<clipPath id="ring"><path d="M935 336 L1284.5 689 L1320 870 L700 870 L700 300 L900 300 Z"/></clipPath>
</defs><rect x="405" y="78" width="1191" height="870" fill="#9da3ab"/><path d="M1447.9 78.0L1596.0 141.5M413.3 78.0L405.0 105.2M1332.7 78.0L1596.0 187.4M474.3 78.0L405.0 279.1M1217.4 78.0L1596.0 230.4M535.3 78.0L405.0 416.5M986.7 78.0L1596.0 309.0M657.3 78.0L405.0 619.8M871.3 78.0L1596.0 345.0M718.3 78.0L405.0 697.1M755.9 78.0L1596.0 379.0M779.3 78.0L405.0 763.0M525.0 78.0L1596.0 441.7M901.2 78.0L405.0 869.3M409.4 78.0L1596.0 470.7M962.1 78.0L405.0 912.8M405.0 113.9L1596.0 498.2M1023.1 78.0L407.4 948.0M405.0 183.3L1596.0 549.4M1144.9 78.0L459.1 948.0M405.0 215.6L1596.0 573.2M1205.8 78.0L484.9 948.0M405.0 246.4L1596.0 596.0M1266.7 78.0L510.8 948.0M405.0 304.1L1596.0 638.6M1388.5 78.0L562.5 948.0M405.0 331.2L1596.0 658.5M1449.4 78.0L588.3 948.0M405.0 357.1L1596.0 677.7M1510.2 78.0L614.1 948.0M405.0 405.9L1596.0 713.7M1596.0 110.3L665.8 948.0M405.0 428.8L1596.0 730.6M1596.0 162.1L691.6 948.0M405.0 450.9L1596.0 746.9M1596.0 210.3L717.4 948.0M405.0 492.7L1596.0 777.7M1596.0 297.6L769.1 948.0M405.0 512.4L1596.0 792.3M1596.0 337.2L794.9 948.0M405.0 531.4L1596.0 806.3M1596.0 374.5L820.7 948.0M405.0 567.6L1596.0 833.0M1596.0 442.7L872.2 948.0M405.0 584.7L1596.0 845.7M1596.0 474.0L898.0 948.0M405.0 601.3L1596.0 857.9M1596.0 503.6L923.8 948.0M405.0 632.9L1596.0 881.2M1596.0 558.4L975.4 948.0M405.0 648.0L1596.0 892.3M1596.0 583.8L1001.2 948.0M405.0 662.6L1596.0 903.1M1596.0 607.9L1026.9 948.0M405.0 690.4L1596.0 923.6M1596.0 652.9L1078.4 948.0M405.0 703.7L1596.0 933.4M1596.0 673.8L1104.2 948.0M405.0 716.6L1596.0 943.0M1596.0 693.9L1130.0 948.0M405.0 741.4L1524.4 948.0M1596.0 731.4L1181.4 948.0M405.0 753.2L1475.3 948.0M1596.0 749.0L1207.2 948.0M405.0 764.7L1426.2 948.0M1596.0 765.9L1232.9 948.0M405.0 786.9L1328.0 948.0M1596.0 797.8L1284.4 948.0M405.0 797.5L1278.9 948.0M1596.0 812.8L1310.1 948.0M405.0 807.8L1229.7 948.0M1596.0 827.3L1335.8 948.0M405.0 827.7L1131.4 948.0M1596.0 854.6L1387.3 948.0M405.0 837.3L1082.2 948.0M1596.0 867.5L1413.0 948.0M405.0 846.6L1033.0 948.0M1596.0 880.0L1438.7 948.0M405.0 864.6L934.6 948.0M1596.0 903.8L1490.1 948.0M405.0 873.3L885.3 948.0M1596.0 915.0L1515.8 948.0M405.0 881.7L836.1 948.0M1596.0 926.0L1541.4 948.0M405.0 898.1L737.5 948.0M1596.0 946.8L1592.8 948.0M405.0 906.0L688.2 948.0M405.0 913.7L638.9 948.0M405.0 928.6L540.2 948.0M405.0 935.8L490.8 948.0M405.0 942.9L441.5 948.0" stroke="#959ba4" stroke-width="1" fill="none" opacity="0.28"/><path d="M1563.1 78.0L1596.0 92.6M1102.1 78.0L1596.0 270.9M596.3 78.0L405.0 527.8M640.4 78.0L1596.0 411.2M840.2 78.0L405.0 819.8M405.0 149.4L1596.0 524.4M1084.0 78.0L433.2 948.0M405.0 275.9L1596.0 617.8M1327.6 78.0L536.6 948.0M405.0 382.0L1596.0 696.0M1571.1 78.0L640.0 948.0M405.0 472.2L1596.0 762.6M1596.0 255.4L743.2 948.0M405.0 549.8L1596.0 819.9M1596.0 409.6L846.5 948.0M405.0 617.4L1596.0 869.7M1596.0 531.7L949.6 948.0M405.0 676.7L1596.0 913.5M1596.0 630.9L1052.7 948.0M405.0 729.2L1573.4 948.0M1596.0 713.1L1155.7 948.0M405.0 776.0L1377.1 948.0M1596.0 782.2L1258.7 948.0M405.0 817.9L1180.6 948.0M1596.0 841.2L1361.5 948.0M405.0 855.7L983.8 948.0M1596.0 892.1L1464.4 948.0M405.0 890.0L786.8 948.0M1596.0 936.5L1567.1 948.0M405.0 921.2L589.5 948.0" stroke="#838992" stroke-width="1" fill="none"/><path d="M713.8 -14.3L394.7 658.6M394.7 658.6L1228.9 827.4M1228.9 827.4L1893.9 430.0M1893.9 430.0L713.8 -14.3" stroke="#6e747d" stroke-width="1.3" fill="none"/><path d="M420.6 604.0L1289.3 791.3" stroke="#767c85" stroke-width="1.2" fill="none"/><path d="M405.0 382.0 L1060.7 554.9" stroke="#5e9c54" stroke-width="2" fill="none"/><path d="M640.0 948.0 L1060.7 554.9" stroke="#b65a62" stroke-width="1.5" fill="none"/><path d="M760 78 L893 290" stroke="#f4f4f4" stroke-width="1.6" fill="none"/><path d="M1237 377 L1390 222" stroke="#d070d8" stroke-width="1.6" fill="none"/><path d="M803.6 454.6C799.2 458.5 785.3 469.3 777.0 478.0C768.7 486.7 759.3 497.2 754.0 507.0C748.7 516.8 745.8 526.2 745.0 536.5C744.2 546.8 751.4 561.0 749.5 568.7C747.6 576.5 736.8 578.1 733.4 583.0C730.0 587.9 727.1 592.2 729.0 598.0C730.9 603.8 736.0 608.3 745.0 618.0C754.0 627.7 767.4 642.3 783.0 656.0C798.6 669.7 824.2 689.7 838.7 700.0C853.2 710.3 864.8 715.0 870.0 718.0" stroke="#e04040" stroke-width="1.2" fill="none"/><path d="M1278.0 433.0C1285.0 437.8 1307.7 451.7 1320.0 462.0C1332.3 472.3 1345.2 484.2 1352.0 495.0C1358.8 505.8 1360.7 515.2 1361.0 527.0C1361.3 538.8 1360.2 552.0 1354.0 566.0C1347.8 580.0 1333.0 598.4 1324.0 610.7C1315.0 623.0 1304.0 635.1 1300.0 640.0" stroke="#e04040" stroke-width="1.2" fill="none"/><path d="M1010.0 235.0C1016.3 234.5 1035.4 233.0 1048.0 232.0C1060.6 231.0 1073.6 228.8 1085.6 228.8C1097.6 228.8 1111.3 228.8 1120.0 232.0C1128.7 235.2 1133.7 241.2 1138.0 248.0C1142.3 254.8 1144.5 265.7 1145.7 272.7C1146.9 279.7 1145.1 287.1 1145.0 290.0" stroke="#e05050" stroke-width="1.1" fill="none"/><path d="M910.0 318.0C915.8 311.7 931.7 289.7 945.0 280.0C958.3 270.3 975.8 264.3 990.0 260.0C1004.2 255.7 1023.3 255.0 1030.0 254.0" stroke="#18228a" stroke-width="20" stroke-linecap="round" fill="none"/><path d="M910.0 318.0C915.8 311.7 931.7 289.7 945.0 280.0C958.3 270.3 975.8 264.3 990.0 260.0C1004.2 255.7 1023.3 255.0 1030.0 254.0" stroke="#2c44bc" stroke-width="17.5" stroke-linecap="round" fill="none"/><path d="M910.0 318.0C915.8 311.7 931.7 289.7 945.0 280.0C958.3 270.3 975.8 264.3 990.0 260.0C1004.2 255.7 1023.3 255.0 1030.0 254.0" stroke="#3c58d4" stroke-width="11.0" stroke-linecap="round" fill="none" transform="translate(-1.5,-1.2)"/><path d="M910.0 318.0C915.8 311.7 931.7 289.7 945.0 280.0C958.3 270.3 975.8 264.3 990.0 260.0C1004.2 255.7 1023.3 255.0 1030.0 254.0" stroke="#5c78e4" stroke-width="5.0" stroke-linecap="round" fill="none" transform="translate(-2.5,-2)" opacity="0.7"/><path d="M1021 223L1054 302" stroke="#18228a" stroke-width="23" stroke-linecap="round" fill="none"/><path d="M1021 223L1054 302" stroke="#2c44bc" stroke-width="20.5" stroke-linecap="round" fill="none"/><path d="M1021 223L1054 302" stroke="#3c58d4" stroke-width="12.7" stroke-linecap="round" fill="none" transform="translate(-1.5,-1.2)"/><path d="M1021 223L1054 302" stroke="#5c78e4" stroke-width="5.8" stroke-linecap="round" fill="none" transform="translate(-2.5,-2)" opacity="0.7"/><path d="M926.0 328.0C930.8 324.0 944.3 309.0 955.0 304.0C965.7 299.0 984.2 299.0 990.0 298.0" stroke="#18228a" stroke-width="17" stroke-linecap="round" fill="none"/><path d="M926.0 328.0C930.8 324.0 944.3 309.0 955.0 304.0C965.7 299.0 984.2 299.0 990.0 298.0" stroke="#2c44bc" stroke-width="14.5" stroke-linecap="round" fill="none"/><path d="M926.0 328.0C930.8 324.0 944.3 309.0 955.0 304.0C965.7 299.0 984.2 299.0 990.0 298.0" stroke="#3c58d4" stroke-width="9.4" stroke-linecap="round" fill="none" transform="translate(-1.5,-1.2)"/><path d="M926.0 328.0C930.8 324.0 944.3 309.0 955.0 304.0C965.7 299.0 984.2 299.0 990.0 298.0" stroke="#5c78e4" stroke-width="4.2" stroke-linecap="round" fill="none" transform="translate(-2.5,-2)" opacity="0.7"/><path d="M933 258L980 320" stroke="#18228a" stroke-width="23" stroke-linecap="round" fill="none"/><path d="M933 258L980 320" stroke="#2c44bc" stroke-width="20.5" stroke-linecap="round" fill="none"/><path d="M933 258L980 320" stroke="#3c58d4" stroke-width="12.7" stroke-linecap="round" fill="none" transform="translate(-1.5,-1.2)"/><path d="M933 258L980 320" stroke="#5c78e4" stroke-width="5.8" stroke-linecap="round" fill="none" transform="translate(-2.5,-2)" opacity="0.7"/><path d="M961 242L1005 307" stroke="#18228a" stroke-width="23" stroke-linecap="round" fill="none"/><path d="M961 242L1005 307" stroke="#2c44bc" stroke-width="20.5" stroke-linecap="round" fill="none"/><path d="M961 242L1005 307" stroke="#3c58d4" stroke-width="12.7" stroke-linecap="round" fill="none" transform="translate(-1.5,-1.2)"/><path d="M961 242L1005 307" stroke="#5c78e4" stroke-width="5.8" stroke-linecap="round" fill="none" transform="translate(-2.5,-2)" opacity="0.7"/><path d="M905 300 Q955 252 1022 240" stroke="#e04060" stroke-width="1.2" fill="none"/><path d="M1150.0 302.0C1155.0 304.7 1171.3 312.3 1180.0 318.0C1188.7 323.7 1198.3 333.0 1202.0 336.0" stroke="#18228a" stroke-width="20" stroke-linecap="round" fill="none"/><path d="M1150.0 302.0C1155.0 304.7 1171.3 312.3 1180.0 318.0C1188.7 323.7 1198.3 333.0 1202.0 336.0" stroke="#2c44bc" stroke-width="17.5" stroke-linecap="round" fill="none"/><path d="M1150.0 302.0C1155.0 304.7 1171.3 312.3 1180.0 318.0C1188.7 323.7 1198.3 333.0 1202.0 336.0" stroke="#3c58d4" stroke-width="11.0" stroke-linecap="round" fill="none" transform="translate(-1.5,-1.2)"/><path d="M1150.0 302.0C1155.0 304.7 1171.3 312.3 1180.0 318.0C1188.7 323.7 1198.3 333.0 1202.0 336.0" stroke="#5c78e4" stroke-width="5.0" stroke-linecap="round" fill="none" transform="translate(-2.5,-2)" opacity="0.7"/><path d="M1170 274L1126 314" stroke="#18228a" stroke-width="22" stroke-linecap="round" fill="none"/><path d="M1170 274L1126 314" stroke="#2c44bc" stroke-width="19.5" stroke-linecap="round" fill="none"/><path d="M1170 274L1126 314" stroke="#3c58d4" stroke-width="12.1" stroke-linecap="round" fill="none" transform="translate(-1.5,-1.2)"/><path d="M1170 274L1126 314" stroke="#5c78e4" stroke-width="5.5" stroke-linecap="round" fill="none" transform="translate(-2.5,-2)" opacity="0.7"/><path d="M1211 326L1180 346" stroke="#18228a" stroke-width="19" stroke-linecap="round" fill="none"/><path d="M1211 326L1180 346" stroke="#2c44bc" stroke-width="16.5" stroke-linecap="round" fill="none"/><path d="M1211 326L1180 346" stroke="#3c58d4" stroke-width="10.5" stroke-linecap="round" fill="none" transform="translate(-1.5,-1.2)"/><path d="M1211 326L1180 346" stroke="#5c78e4" stroke-width="4.8" stroke-linecap="round" fill="none" transform="translate(-2.5,-2)" opacity="0.7"/><path d="M1219 351L1192 361" stroke="#18228a" stroke-width="18" stroke-linecap="round" fill="none"/><path d="M1219 351L1192 361" stroke="#2c44bc" stroke-width="15.5" stroke-linecap="round" fill="none"/><path d="M1219 351L1192 361" stroke="#3c58d4" stroke-width="9.9" stroke-linecap="round" fill="none" transform="translate(-1.5,-1.2)"/><path d="M1219 351L1192 361" stroke="#5c78e4" stroke-width="4.5" stroke-linecap="round" fill="none" transform="translate(-2.5,-2)" opacity="0.7"/><path d="M1177 266 L1135 304" stroke="#e04060" stroke-width="1" fill="none"/><g clip-path="url(#ring)"><path d="M908.9 773.6L898.5 766.1L888.4 758.1L878.8 749.6L869.7 740.6L861.0 731.2L852.8 721.4L845.1 711.1L838.0 700.5L831.4 689.6L825.5 678.4L820.1 666.9L815.3 655.1L811.1 643.2L807.6 631.0L804.7 618.7L802.4 606.3L800.9 593.9L799.9 581.3L799.7 568.8L800.1 556.3L801.2 543.9L802.9 531.5L805.3 519.3L808.3 507.2L812.0 495.4L816.3 483.7L821.2 472.4L826.7 461.3L832.9 450.5L839.6 440.1L846.8 430.0L854.6 420.4L862.9 411.2L871.7 402.4L880.9 394.2L890.6 386.4L900.7 379.2L911.2 372.5L922.1 366.4L933.3 360.8L944.8 355.9L956.5 351.5L968.5 347.8L980.7 344.7L993.1 342.2L1005.6 340.4L1018.1 339.3L1030.8 338.8L1043.5 338.9L1056.2 339.8L1068.8 341.2L1081.4 343.3L1093.9 346.1L1106.2 349.5L1118.3 353.5L1130.3 358.1L1142.0 363.4L1153.4 369.2L1164.5 375.6L1175.3 382.6L1185.7 390.1L1195.7 398.1L1205.3 406.6L1214.5 415.5L1223.2 424.9L1231.4 434.8L1239.0 445.0L1246.2 455.6L1252.7 466.5L1258.7 477.8L1264.1 489.3L1268.9 501.0L1273.1 513.0L1276.6 525.1L1279.5 537.4L1281.7 549.8L1283.3 562.3L1284.2 574.8L1284.5 587.3L1284.1 599.8L1283.0 612.3L1281.3 624.6L1278.9 636.8L1275.9 648.9L1272.2 660.8L1267.9 672.4L1263.0 683.8L1257.4 694.9L1251.3 705.6L1244.6 716.1L1237.4 726.1L1229.6 735.7L1221.3 744.9L1212.5 753.7L1203.2 762.0L1193.5 769.7L1183.4 777.0L1172.9 783.7L1162.1 789.8L1150.9 795.3L1139.4 800.3L1127.6 804.6L1115.7 808.3L1103.5 811.4L1091.1 813.9L1078.6 815.7L1066.0 816.8L1053.4 817.3L1040.7 817.2L1028.0 816.4L1015.3 814.9L1002.8 812.8L990.3 810.0L978.0 806.6L965.8 802.6L953.9 798.0L942.2 792.8L930.8 786.9L919.7 780.5Z" fill="url(#nav)" stroke="#1a3cf0" stroke-width="2"/><path d="M865.7 678.8L857.3 666.6L849.3 654.1L842.0 641.3L835.1 628.3L828.9 615.0L823.3 601.6L818.3 588.0L813.9 574.2L810.1 560.4L807.1 546.6L804.6 532.8L802.9 519.0L801.8 505.2L801.4 491.6L801.6 478.1L802.6 464.9L804.2 451.8L806.4 439.0L809.4 426.5L813.0 414.4L817.2 402.5L822.1 391.1L827.6 380.1L833.7 369.6L840.4 359.6L847.6 350.0L855.4 341.0L863.7 332.6L872.6 324.7L881.9 317.5L891.7 310.9L901.9 304.9L912.5 299.6L923.4 295.0L934.8 291.0L946.4 287.8L958.3 285.3L970.4 283.4L982.8 282.3L995.3 282.0L1008.0 282.3L1020.8 283.4L1033.7 285.2L1046.6 287.7L1059.5 290.9L1072.4 294.9L1085.2 299.5L1097.9 304.8L1110.5 310.7L1122.9 317.3L1135.1 324.5L1147.1 332.4L1158.8 340.8L1170.1 349.8L1181.2 359.3L1191.9 369.3L1202.2 379.9L1212.1 390.8L1221.5 402.2L1230.4 414.0L1238.9 426.2L1246.8 438.7L1254.2 451.5L1261.0 464.5L1267.2 477.8L1272.8 491.2L1277.9 504.9L1282.2 518.6L1286.0 532.4L1289.1 546.2L1291.5 560.1L1293.3 573.9L1294.4 587.6L1294.8 601.2L1294.5 614.7L1293.6 627.9L1292.0 641.0L1289.7 653.8L1286.8 666.3L1283.2 678.5L1278.9 690.3L1274.0 701.7L1268.6 712.7L1262.5 723.2L1255.8 733.3L1248.5 742.8L1240.7 751.8L1232.4 760.2L1223.6 768.1L1214.2 775.3L1204.5 781.9L1194.3 787.9L1183.7 793.2L1172.7 797.8L1161.4 801.8L1149.8 805.0L1137.9 807.6L1125.7 809.4L1113.3 810.5L1100.8 810.8L1088.1 810.5L1075.3 809.4L1062.5 807.6L1049.5 805.1L1036.6 801.9L1023.7 798.0L1010.9 793.3L998.2 788.1L985.6 782.1L973.2 775.5L961.0 768.3L949.1 760.4L937.4 752.0L926.0 743.0L914.9 733.5L904.2 723.5L894.0 713.0L884.1 702.0L874.7 690.6Z" fill="#00ffff"/><path d="M932.5 663.6L924.3 653.5L916.6 643.1L909.4 632.3L902.7 621.2L896.6 609.8L890.9 598.2L885.9 586.5L881.4 574.5L877.5 562.4L874.3 550.2L871.6 537.9L869.5 525.6L868.1 513.3L867.3 501.0L867.1 488.8L867.6 476.7L868.7 464.7L870.4 452.8L872.7 441.2L875.7 429.8L879.2 418.6L883.4 407.8L888.1 397.2L893.4 387.0L899.3 377.2L905.7 367.8L912.7 358.8L920.1 350.3L928.0 342.3L936.4 334.7L945.2 327.7L954.5 321.2L964.1 315.2L974.1 309.9L984.5 305.1L995.1 300.9L1006.0 297.3L1017.2 294.4L1028.6 292.1L1040.2 290.4L1051.9 289.4L1063.8 289.0L1075.7 289.2L1087.7 290.1L1099.8 291.6L1111.8 293.8L1123.8 296.6L1135.7 300.1L1147.5 304.1L1159.2 308.7L1170.7 314.0L1182.0 319.8L1193.0 326.2L1203.8 333.1L1214.4 340.5L1224.5 348.5L1234.4 356.9L1243.8 365.8L1252.9 375.1L1261.5 384.8L1269.7 395.0L1277.4 405.4L1284.6 416.2L1291.3 427.3L1297.5 438.7L1303.1 450.2L1308.2 462.0L1312.6 474.0L1316.5 486.1L1319.8 498.3L1322.5 510.6L1324.5 522.9L1326.0 535.2L1326.8 547.5L1326.9 559.7L1326.5 571.8L1325.4 583.8L1323.7 595.6L1321.3 607.3L1318.4 618.7L1314.8 629.8L1310.7 640.7L1305.9 651.2L1300.6 661.4L1294.8 671.2L1288.3 680.7L1281.4 689.6L1274.0 698.2L1266.0 706.2L1257.6 713.8L1248.8 720.8L1239.6 727.3L1229.9 733.3L1219.9 738.6L1209.6 743.4L1199.0 747.6L1188.0 751.2L1176.9 754.1L1165.5 756.4L1153.9 758.1L1142.1 759.1L1130.3 759.5L1118.3 759.3L1106.3 758.4L1094.3 756.8L1082.3 754.7L1070.3 751.9L1058.4 748.4L1046.5 744.4L1034.9 739.7L1023.4 734.5L1012.1 728.7L1001.0 722.3L990.2 715.4L979.7 707.9L969.5 700.0L959.7 691.6L950.2 682.7L941.2 673.4Z" fill="url(#cyl)"/></g><path d="M888 327 L881 306 Q878 293 886 288 Q897 283 906 292 L936 337 L900 360Z" fill="#00ffff"/><path d="M882 300 L887 305 M884 308 L889 313 M886 316 L891 320" stroke="#223" stroke-width="0.9" fill="none"/><path d="M937.0 344.0C930.7 348.3 910.3 357.6 899.0 370.0C887.7 382.4 875.7 401.9 869.0 418.6C862.3 435.3 860.8 449.8 859.0 470.0C857.2 490.2 856.2 516.7 858.0 540.0C859.8 563.3 861.3 586.7 870.0 610.0C878.7 633.3 893.3 660.0 910.0 680.0C926.7 700.0 950.0 718.0 970.0 730.0C990.0 742.0 1011.0 746.9 1030.0 752.0C1049.0 757.1 1065.7 759.0 1084.0 760.7C1102.3 762.4 1122.3 762.5 1140.0 762.0C1157.7 761.5 1171.7 762.9 1190.0 757.6C1208.3 752.3 1240.0 734.6 1250.0 730.0" stroke="#d8e090" stroke-width="0.9" fill="none" stroke-dasharray="3 2"/><path d="M790.0 467.5C792.3 465.2 795.4 459.9 803.6 454.0C811.8 448.1 827.9 437.8 839.0 432.0C850.1 426.2 864.8 421.2 870.0 419.0" stroke="#e04848" stroke-width="1" fill="none" stroke-dasharray="4 2"/><path d="M939.1 329.2L946.4 322.9L954.1 317.0L962.2 311.7L970.7 306.9L979.7 302.7L988.9 299.0L998.5 296.0L1008.5 293.5L1018.7 291.6L1029.1 290.3L1039.8 289.6L1050.6 289.6L1061.7 290.1L1072.8 291.2L1084.1 293.0L1095.4 295.3L1106.8 298.2L1118.2 301.7L1129.5 305.8L1140.8 310.5L1152.0 315.6L1163.2 321.4L1174.1 327.6L1184.9 334.4L1195.5 341.6L1205.8 349.3L1215.9 357.4L1225.7 366.0L1235.2 374.9L1244.4 384.2L1253.1 393.9L1261.5 403.9L1269.5 414.2L1277.0 424.7L1284.1 435.5L1290.7 446.5L1296.8 457.7L1302.4 469.0L1307.4 480.4L1312.0 491.9L1315.9 503.5L1319.4 515.0L1322.2 526.6L1324.4 538.1L1326.1 549.6L1327.2 560.9L1327.7 572.1L1327.6 583.2L1326.8 594.0L1325.5 604.6L1323.6 615.0L1321.2 625.0L1318.1 634.8L1314.5 644.2L1310.3 653.2L1305.6 661.9L1300.3 670.1L1294.5 677.9L1288.2 685.3L1281.4 692.2L1274.2 698.5L1266.5 704.4L1258.3 709.7L1249.8 714.5L1240.9 718.7L1231.6 722.4L1222.0 725.4L1212.1 727.9L1201.9 729.8L1191.5 731.1L1180.8 731.8L1169.9 731.8L1158.9 731.3L1147.7 730.2L1136.5 728.4L1125.2 726.1L1113.8 723.2L1102.4 719.7L1091.0 715.6L1079.7 711.0L1068.5 705.8L1057.4 700.0L1046.4 693.8L1035.6 687.0L1025.1 679.8L1014.7 672.1L1004.6 664.0L994.8 655.4L985.3 646.5L976.2 637.2L967.4 627.5L959.0 617.5L951.1 607.2L943.5 596.7L936.5 585.9L929.9 574.9L923.8 563.7L918.2 552.4L913.1 541.0L908.6 529.5L904.6 517.9L901.2 506.4L898.4 494.8L896.1 483.3L894.4 471.8L893.4 460.5L892.9 449.3L893.0 438.2L893.7 427.4L895.0 416.8L896.9 406.4L899.4 396.4L902.4 386.6L906.1 377.2L910.3 368.2L915.0 359.5L920.3 351.3L926.1 343.5L932.3 336.1Z" fill="#264296" stroke="#1e3cf4" stroke-width="2.4"/><path d="M868.0 419.0C873.3 417.2 886.3 412.2 900.0 408.0C913.7 403.8 931.8 397.7 950.0 394.0C968.2 390.3 986.1 387.6 1009.4 386.0C1032.7 384.4 1069.2 383.9 1090.0 384.4C1110.8 384.9 1113.7 385.6 1134.0 389.0C1154.3 392.4 1188.0 397.5 1212.0 404.8C1236.0 412.1 1267.0 428.3 1278.0 433.0" stroke="#d03868" stroke-width="1.3" fill="none"/><path d="M1012.0 468.0C1023.3 467.3 1057.0 462.3 1080.0 464.0C1103.0 465.7 1130.0 471.2 1150.0 478.0C1170.0 484.8 1187.5 496.3 1200.0 505.0C1212.5 513.7 1220.8 525.8 1225.0 530.0" stroke="#8a8aa8" stroke-width="0.9" fill="none"/><path d="M1210.6 739.0C1213.8 733.1 1224.6 716.4 1229.5 703.6C1234.4 690.8 1238.6 675.9 1240.0 662.0C1241.4 648.1 1241.0 635.7 1238.0 620.0C1235.0 604.3 1228.8 587.2 1222.0 568.0C1215.2 548.8 1204.0 523.8 1197.0 505.0C1190.0 486.2 1182.3 467.2 1180.0 455.0C1177.7 442.8 1180.0 437.2 1183.0 432.0C1186.0 426.8 1192.2 424.8 1198.0 424.0C1203.8 423.2 1207.8 419.2 1218.0 427.0C1228.2 434.8 1247.4 455.0 1259.0 470.6C1270.6 486.2 1281.3 504.2 1287.6 520.8C1293.9 537.4 1295.9 553.5 1297.0 570.0C1298.1 586.5 1296.9 603.0 1294.0 620.0C1291.1 637.0 1286.2 656.7 1279.6 672.0C1273.0 687.3 1258.7 705.3 1254.5 712.0" stroke="#f0a030" stroke-width="1.8" fill="none"/><path d="M898.0 385.0C901.7 381.8 913.7 371.8 920.0 366.0C926.3 360.2 933.0 354.3 936.0 350.0C939.0 345.7 939.0 342.0 938.0 340.0C937.0 338.0 934.3 336.0 930.0 338.0C925.7 340.0 915.0 349.7 912.0 352.0" stroke="#f0a030" stroke-width="1.8" fill="none"/><path d="M1085.5 756 L1085.5 948" stroke="#f4f4f4" stroke-width="1.6" fill="none"/><path d="M1081 762 L1042 793.7 L1068.5 796.8" stroke="#e8a840" stroke-width="1.4" fill="none"/><rect x="1040" y="791.5" width="4.5" height="4.5" fill="#fff" stroke="#e8a840" stroke-width="0.6"/><path d="M1062.7 556 L1062.7 532" stroke="#1020f8" stroke-width="3" fill="none"/><path d="M1062.7 512 L1067.5 526 L1062.7 536 L1058 526 Z" fill="#1020f8"/><path d="M1060 556 L1040 550" stroke="#20f020" stroke-width="2.8" fill="none"/><path d="M1018 543.5 L1031 540.5 L1042 550 L1031 553 Z" fill="#20f020"/><path d="M1061 558 L1053 566" stroke="#f01818" stroke-width="2.8" fill="none"/><path d="M1040 576 L1045 564 L1057 560 L1051 571 Z" fill="#f01818"/><circle cx="1062.5" cy="554.5" r="2.6" fill="#1030f0"/><path d="M446 888 L446 906 L430 904 M446 906 L436 917" stroke="#555" stroke-width="1" fill="none"/><text x="447" y="890" font-family="Liberation Sans" font-size="10" fill="#444">z</text><text x="416" y="907" font-family="Liberation Sans" font-size="10" fill="#444">y</text><text x="429" y="924" font-family="Liberation Sans" font-size="10" fill="#444">x</text></svg><div class="a" style="left:405px;top:78px;width:87px;height:18px;background:#b3c4d8"></div><span class="a" style="left:414px;top:80px;font-size:12px;color:#101828">Perspective</span><div class="a" style="left:482px;top:80px;width:1px;height:15px;background:#111"></div><svg class="a" style="left:484px;top:84px" width="9" height="6" viewBox="0 0 9 6"><path d="M1 0.5 L8 0.5 L4.5 5Z" fill="#111"/></svg><div class="a" style="left:405px;top:948px;width:1191px;height:9px;background:#e6e8ee"></div><div class="a" style="left:406px;top:949px;width:76px;height:8px;background:#fff;border:1px solid #c8ccd2;border-bottom:none"></div><div class="a" style="left:483px;top:949px;width:1px;height:8px;background:#c8ccd2"></div><div class="a" style="left:521px;top:949px;width:1px;height:8px;background:#c8ccd2"></div><div class="a" style="left:563px;top:949px;width:1px;height:8px;background:#c8ccd2"></div><div class="a" style="left:608px;top:949px;width:1px;height:8px;background:#c8ccd2"></div><div class="a" style="left:640px;top:949px;width:1px;height:8px;background:#c8ccd2"></div><span class="a" style="left:416px;top:952px;font-size:12px;color:#222">Perspective</span><span class="a" style="left:493px;top:952px;font-size:12px;color:#222">Top</span><span class="a" style="left:530px;top:952px;font-size:12px;color:#222">Front</span><span class="a" style="left:575px;top:952px;font-size:12px;color:#222">Right</span><span class="a" style="left:622px;top:952px;font-size:12px;color:#222">+</span><!--/VP-->
</body></html>
